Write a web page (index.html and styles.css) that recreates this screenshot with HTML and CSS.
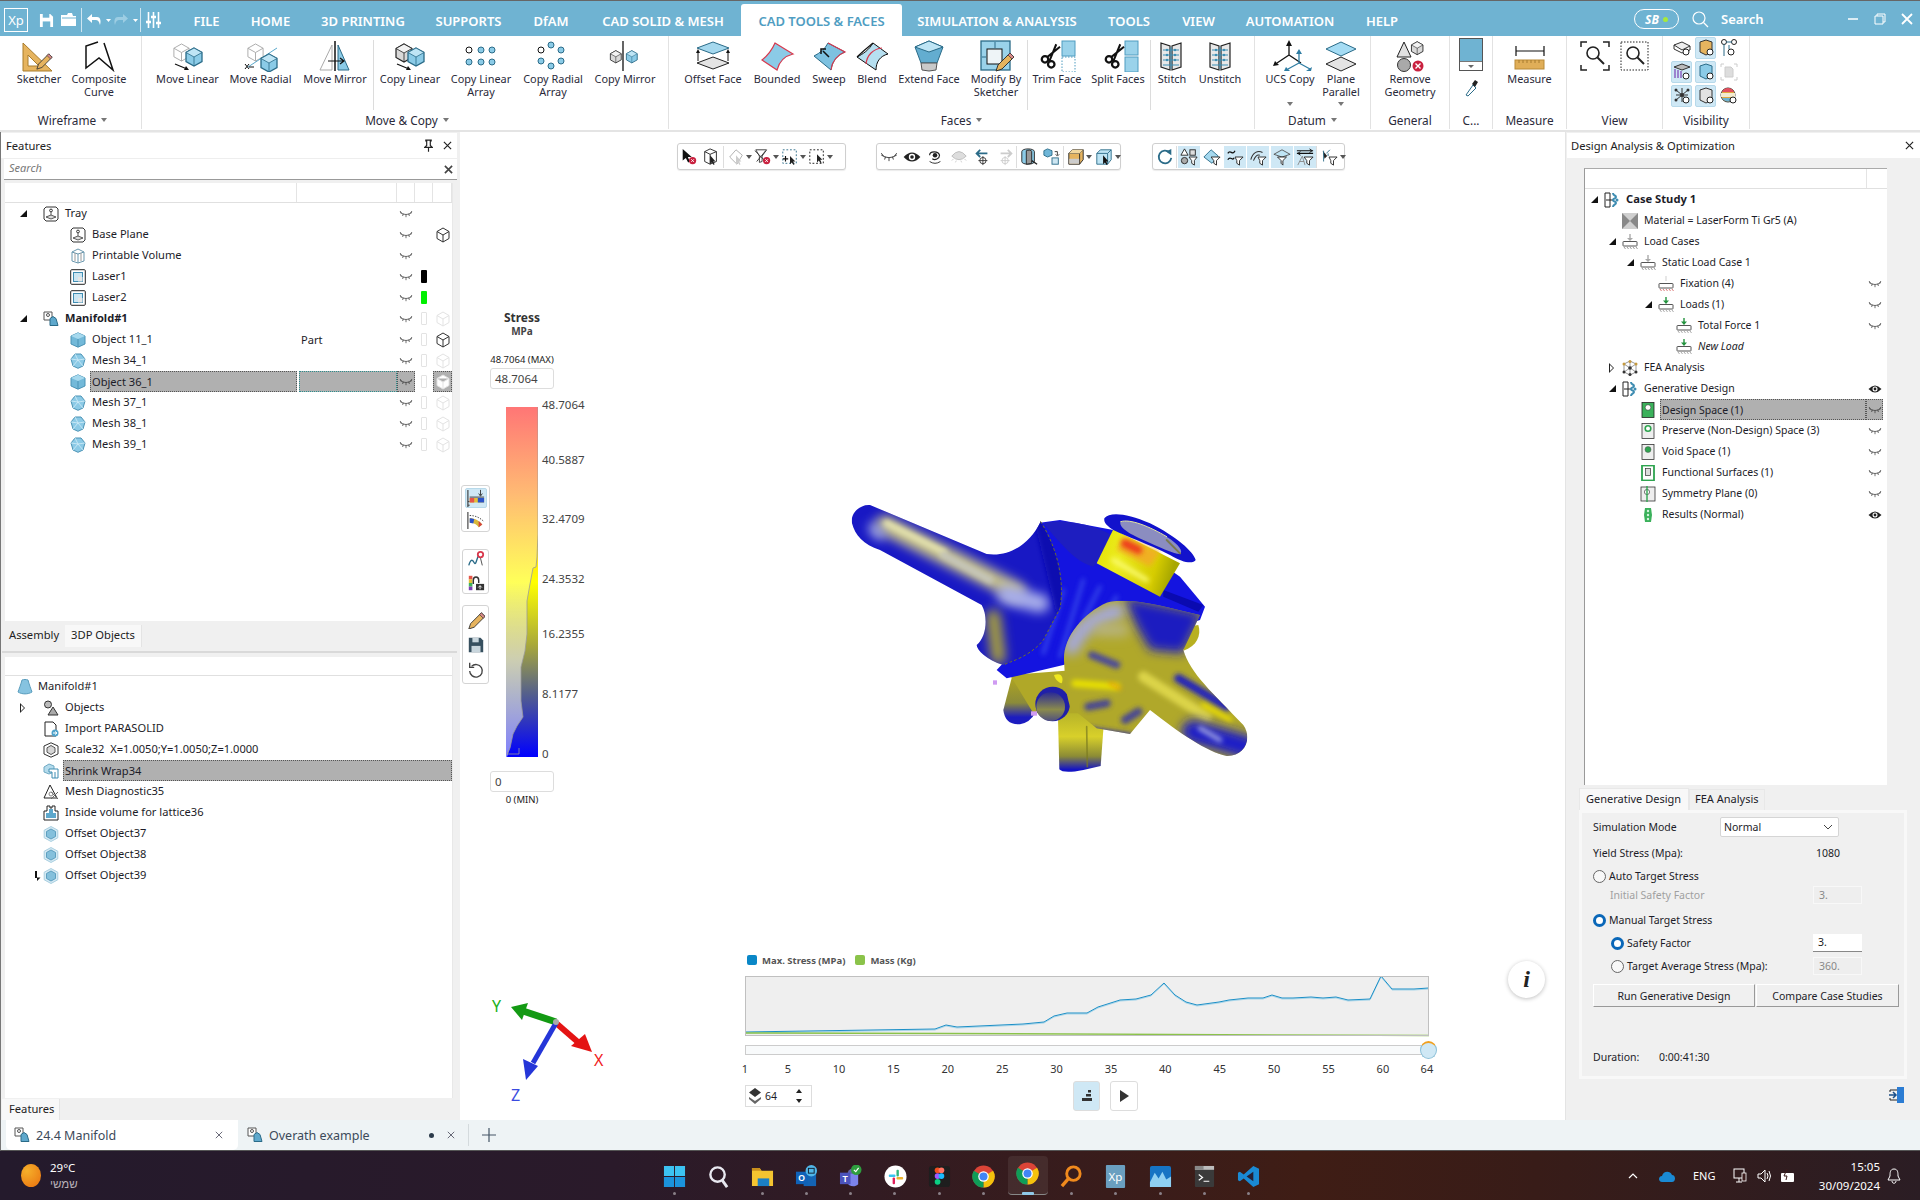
FILE: index.html
```html
<!DOCTYPE html>
<html lang="en">
<head>
<meta charset="utf-8">
<title>3D Xpert</title>
<link rel="stylesheet" href="styles.css">
</head>
<body>
<svg class="defs" aria-hidden="true">
<defs>
<g id="cb"><path d="M10 1 18 5.5V14.5L10 19 2 14.5V5.5Z" fill="#8bcbe7" stroke="#2a6b88" stroke-width="1.3"/><path d="M2 5.5 10 1 18 5.5 10 10Z" fill="#bfe5f5" stroke="#2a6b88" stroke-width=".8"/><path d="M10 10V19" stroke="#2a6b88" stroke-width=".8"/></g>
<g id="cg"><path d="M10 1 18 5.5V14.5L10 19 2 14.5V5.5Z" fill="#d9d9d9" stroke="#222" stroke-width="1.2"/><path d="M2 5.5 10 1 18 5.5 10 10Z" fill="#f2f2f2" stroke="#222" stroke-width=".8"/><path d="M10 10V19" stroke="#222" stroke-width=".8"/></g>
<g id="cw"><path d="M10 1 18 5.5V14.5L10 19 2 14.5V5.5Z M2 5.5 10 10 18 5.5M10 10V19" fill="#fff" stroke="#aaa" stroke-width="1"/></g>
<g id="sciss"><circle cx="4" cy="13" r="2.6" fill="#fff" stroke="#111" stroke-width="1.8"/><circle cx="9" cy="17" r="2.6" fill="#fff" stroke="#111" stroke-width="1.8"/><path d="M5.5 11.5 16 3M7.5 14.5 13 1" stroke="#111" stroke-width="1.6"/></g>
<g id="pencil"><path d="M15 1 19 5 7 17 1 19 3 13Z" fill="#e6b35e" stroke="#333" stroke-width="1"/><path d="M15 1 19 5 17 7 13 3Z" fill="#d98a8a" stroke="#333" stroke-width=".7"/></g>
<g id="stitch"><path d="M2 3 11 6V30L2 27ZM22 3 13 6V30L22 27Z" fill="#e8e8e8" stroke="#222" stroke-width="1.2"/><path d="M4 10H20M4 15H20M4 20H20M4 25H20" stroke="#3c8fb5" stroke-width="1"/><path d="M12 7V29" stroke="#3c8fb5" stroke-width="1"/><g fill="#3c8fb5"><circle cx="8" cy="10" r="1.2"/><circle cx="16" cy="10" r="1.2"/><circle cx="8" cy="15" r="1.2"/><circle cx="16" cy="15" r="1.2"/><circle cx="8" cy="20" r="1.2"/><circle cx="16" cy="20" r="1.2"/></g></g>
<symbol id="s-sketcher" viewBox="0 0 44 32"><path d="M6 3 35 31H6ZM11 15V26H22Z" fill="#e6b45f" fill-rule="evenodd" stroke="#a87c2c"/><use href="#pencil" transform="translate(19 13) scale(.85)"/></symbol>
<symbol id="s-comp" viewBox="0 0 44 32"><path d="M21 2 9 6V28L22 18 36 30 27 3" fill="none" stroke="#111" stroke-width="1.5"/></symbol>
<symbol id="s-mlin" viewBox="0 0 44 32"><use href="#cw" transform="translate(6 3) scale(.95)"/><use href="#cb" transform="translate(18 7)"/><path d="M9 24 21 29" stroke="#111" stroke-width="1.2"/><path d="M18 30 23 30 20 26Z" fill="#111"/></symbol>
<symbol id="s-mrad" viewBox="0 0 44 32"><use href="#cw" transform="translate(7 3) scale(.95)"/><path d="M38 8 9 27" stroke="#5aa8cb"/><use href="#cb" transform="translate(20 13)"/><path d="M6 24 10 29M6 29 10 24M10 27H15" stroke="#111"/></symbol>
<symbol id="s-mmir" viewBox="0 0 44 32"><path d="M19 5 7 30H19Z" fill="#fff" stroke="#aaa"/><path d="M25 5 36 30H25Z" fill="#8bcbe7" stroke="#2a6b88"/><path d="M22 1V31" stroke="#111" stroke-width="1.5"/><path d="M15 21H30M27 18 31 21 27 24" stroke="#111" stroke-width="1.2" fill="none"/></symbol>
<symbol id="s-clin" viewBox="0 0 44 32"><use href="#cg" transform="translate(6 3)"/><use href="#cb" transform="translate(18 7)"/><path d="M9 24 21 29" stroke="#111" stroke-width="1.2"/><path d="M18 30 23 30 20 26Z" fill="#111"/></symbol>
<symbol id="s-clar" viewBox="0 0 44 32"><g fill="#8bcbe7" stroke="#2a6b88"><circle cx="22" cy="10" r="3"/><circle cx="33" cy="10" r="3"/><circle cx="10" cy="22" r="3"/><circle cx="22" cy="22" r="3"/><circle cx="33" cy="22" r="3"/></g><circle cx="10" cy="10" r="3" fill="#fff" stroke="#111"/></symbol>
<symbol id="s-crar" viewBox="0 0 44 32"><g fill="#8bcbe7" stroke="#2a6b88"><circle cx="20" cy="5" r="3"/><circle cx="30" cy="10" r="3"/><circle cx="30" cy="21" r="3"/><circle cx="20" cy="26" r="3"/><circle cx="10" cy="21" r="3"/></g><circle cx="10" cy="10" r="3" fill="#fff" stroke="#111"/></symbol>
<symbol id="s-cmir" viewBox="0 0 44 32"><use href="#cg" transform="translate(6 10) scale(.68)"/><use href="#cb" transform="translate(22 10) scale(.68)"/><path d="M20 1V31" stroke="#111" stroke-width="1.3"/></symbol>
<symbol id="s-off" viewBox="0 0 44 32"><path d="M22 2 38 8 22 14 6 8Z" fill="#a5d8ee" stroke="#2a6b88"/><path d="M22 17 38 23 22 29 6 23Z" fill="#e4e4e4" stroke="#222"/><path d="M7 21V11M37 21V11" stroke="#111"/><path d="M5 13 7 9 9 13ZM35 13 37 9 39 13Z" fill="#111"/></symbol>
<symbol id="s-bound" viewBox="0 0 44 32"><path d="M20 3 38 14C30 16 24 22 22 30L7 20C12 16 17 10 20 3Z" fill="#8bcbe7" stroke="#d8394d" stroke-width="1.2"/></symbol>
<symbol id="s-sweep" viewBox="0 0 44 32"><path d="M21 3 38 12C30 15 25 22 24 30L7 16C13 13 18 9 21 3Z" fill="#7dc1e0" stroke="#2a6b88" stroke-width="1"/><path d="M21 3 38 12C30 15 25 22 24 30" fill="none" stroke="#d8394d" stroke-width="1.1"/><path d="M22 17 16 11M14 14V9H19" stroke="#111" stroke-width="1.5" fill="none"/></symbol>
<symbol id="s-blend" viewBox="0 0 44 32"><path d="M23 3 38 14C30 16 26 22 26 30L7 17C13 14 19 10 23 3Z" fill="#b6dff0" stroke="#111" stroke-width="1"/><path d="M32 8C23 9 17 15 16 24" fill="none" stroke="#d8394d" stroke-width="1.2"/><path d="M23 3C17 8 13 11 7 17" fill="none" stroke="#111" stroke-width="1.2"/></symbol>
<symbol id="s-ext" viewBox="0 0 44 32"><path d="M8 7 22 1 36 7 30 23H14Z" fill="#63add0" stroke="#2a6b88"/><path d="M8 7 22 1 36 7 22 12Z" fill="#bfe5f5" stroke="#2a6b88"/><path d="M14 23H30L29 30 22 31 15 30Z" fill="#c9c9c9" stroke="#555"/></symbol>
<symbol id="s-mod" viewBox="0 0 44 32"><rect x="7" y="1" width="29" height="29" fill="#9ad2ea" stroke="#2a6b88" stroke-width="1.3"/><rect x="13" y="9" width="15" height="15" fill="#eef4f7" stroke="#111"/><path d="M21 2V8M8 17H12" stroke="#2a6b88"/><use href="#pencil" transform="translate(21 12)"/></symbol>
<symbol id="s-trim" viewBox="0 0 44 32"><rect x="27" y="1" width="13" height="15" fill="#9ad2ea" stroke="#4f9cc0"/><rect x="27" y="17" width="13" height="15" fill="#fff" stroke="#4f9cc0" stroke-dasharray="1.5 1.5"/><use href="#sciss" transform="translate(5 3) scale(1.25)"/></symbol>
<symbol id="s-split" viewBox="0 0 44 32"><rect x="29" y="1" width="13" height="14" fill="#9ad2ea" stroke="#4f9cc0"/><rect x="29" y="17" width="13" height="15" fill="#9ad2ea" stroke="#4f9cc0"/><use href="#sciss" transform="translate(8 3) scale(1.25)"/></symbol>
<symbol id="s-sti" viewBox="0 0 44 32"><use href="#stitch" transform="translate(9 0)"/></symbol>
<symbol id="s-uns" viewBox="0 0 44 32"><use href="#stitch" transform="translate(10 0)"/></symbol>
<symbol id="s-ucs" viewBox="0 0 44 32"><path d="M21 2V15M21 15 9 23M21 15 33 23" stroke="#111" stroke-width="1.3" fill="none"/><path d="M18 6 21 0 24 6ZM7 21 5 26 11 25Z" fill="#111"/><path d="M31 11V23M31 23 20 29M31 23 42 29" stroke="#2f7da3" stroke-width="1.3" fill="none"/><path d="M28 14 31 9 34 14ZM18 27 16 31 22 31ZM44 27 43 31 38 31Z" fill="#2f7da3"/></symbol>
<symbol id="s-plane" viewBox="0 0 44 32"><path d="M22 2 37 9 22 16 7 9Z" fill="#a5dcf4" stroke="#2a6b88"/><path d="M22 17 37 24 22 31 7 24Z" fill="#e4e4e4" stroke="#222"/></symbol>
<symbol id="s-rem" viewBox="0 0 44 32"><path d="M16 2 23 17H9Z" fill="#e0e0e0" stroke="#222"/><use href="#cg" transform="translate(22 1) scale(.72)"/><circle cx="16" cy="25" r="6.5" fill="#a9a9a9" stroke="#333"/><circle cx="30" cy="26" r="5.5" fill="#c9213f"/><path d="M27.5 23.5 32.5 28.500M32.5 23.5 27.500 28.500" stroke="#fff" stroke-width="1.4"/></symbol>
<symbol id="s-meas" viewBox="0 0 44 32"><path d="M8 6V16M36 6V16M8 11H36" stroke="#111" stroke-width="1.2"/><rect x="7" y="20" width="29" height="9" fill="#e0ae58" stroke="#b98a37"/><path d="M11 20v3M15 20v3M19 20v3M23 20v3M27 20v3M31 20v3" stroke="#a67a2e"/></symbol>
<symbol id="e-c" viewBox="0 0 14 8"><path d="M1 2.500Q7 6.500 13 2.500M1 1 2.800 3.400M4.300 3.700 3.600 6M7 4.500V7.200M9.700 3.700 10.400 6M13 1 11.200 3.400" fill="none" stroke="#333" stroke-width=".7"/></symbol>
<symbol id="e-o" viewBox="0 0 14 10"><path d="M.5 5Q7-2 13.500 5 7 12 .5 5Z" fill="#222"/><circle cx="7" cy="5" r="2.500" fill="#fff"/><circle cx="7" cy="5" r="1.400" fill="#222"/></symbol>
<symbol id="t-box" viewBox="0 0 16 16"><path d="M8 1 14 4.500V11.500L8 15 2 11.500V4.500Z M2 4.500 8 8 14 4.500M8 8V15" fill="#fff" stroke="#333" stroke-width="1"/></symbol>
<symbol id="t-boxg" viewBox="0 0 16 16"><path d="M8 1 14 4.500V11.500L8 15 2 11.500V4.500Z M2 4.500 8 8 14 4.500M8 8V15" fill="#fff" stroke="#e3e3e3" stroke-width="1"/></symbol>
<symbol id="t-tray" viewBox="0 0 16 16"><path d="M3 1H13L15 3V13L13 15H3L1 13V3Z" fill="#fff" stroke="#333"/><circle cx="8" cy="4.500" r="1.400" fill="none" stroke="#333"/><path d="M8 6V9M3 11 8 9 13 11 8 13Z" stroke="#333" fill="#ddd" stroke-width=".8"/></symbol>
<symbol id="t-vol" viewBox="0 0 16 16"><path d="M2 4 8 1 14 4V13L8 15 2 13ZM2 4 8 6 14 4M8 6V15" fill="none" stroke="#6a97ad"/><path d="M5 5V13M11 5V13" stroke="#999"/></symbol>
<symbol id="t-las" viewBox="0 0 16 16"><rect x=".7" y=".7" width="14.600" height="14.600" rx="1" fill="#fff" stroke="#222"/><rect x="3.500" y="3.500" width="9" height="9" fill="#cde6f2" stroke="#3f8db2"/><rect x="8" y="8" width="4.500" height="4.500" fill="#e6e6e6"/></symbol>
<symbol id="t-man" viewBox="0 0 16 16"><path d="M1 1H9V9H1Z" fill="#fff" stroke="#555"/><circle cx="5" cy="4" r="1.500" fill="none" stroke="#555"/><path d="M7 15V8L10 6 13 8 15 15Z" fill="#5ea8cc" stroke="#2a6b88" transform="translate(0 -.5)"/></symbol>
<symbol id="t-cube" viewBox="0 0 16 16"><path d="M8 .8 15 4V12L8 15.200 1 12V4Z" fill="#73b9d9" stroke="#4b93b5"/><path d="M1 4 8 7 15 4 8 .8Z" fill="#a6d9ee"/><path d="M8 7V15" stroke="#4b93b5"/></symbol>
<symbol id="t-mesh" viewBox="0 0 16 16"><path d="M5 1H11L15 6 13 13 8 15.300 3 13 1 6Z" fill="#8ccae6" stroke="#4b93b5"/><path d="M5 1 8 7 15 6M8 7 3 13M8 7 13 13M1 6 8 7" stroke="#d3eef9" fill="none" stroke-width=".8"/></symbol>
<symbol id="t-cone" viewBox="0 0 16 16"><path d="M5 1C7 .3 9 .3 11 1 12 5 14 10 15 13 11 15.500 5 15.500 1 13 2 10 4 5 5 1Z" fill="#86c3e0" stroke="#5a9dbd"/></symbol>
<symbol id="t-objs" viewBox="0 0 16 16"><circle cx="5" cy="4.500" r="3.500" fill="#bbb" stroke="#333"/><path d="M10 7 15 15H5Z" fill="#aaa" stroke="#333"/></symbol>
<symbol id="t-imp" viewBox="0 0 16 16"><path d="M2 1H10L13 4V15H2Z" fill="#fff" stroke="#222"/><circle cx="12" cy="12" r="3.500" fill="#4fa3cb"/><path d="M10 12H14M12 10.500 14 12 12 13.500" stroke="#fff" fill="none"/></symbol>
<symbol id="t-sca" viewBox="0 0 16 16"><path d="M8 .8 15 4V12L8 15.200 1 12V4Z" fill="#fff" stroke="#333"/><path d="M8 3.500 12 5.800V10.200L8 12.500 4 10.200V5.800Z" fill="#d6d6d6" stroke="#555"/></symbol>
<symbol id="t-shr" viewBox="0 0 16 16"><path d="M1 4 6 1 11 3V9L6 11 1 9Z" fill="#b4dbec" stroke="#6fa9c3"/><path d="M6 6H15V15H9V9H6Z" fill="#fff" stroke="#3f8db2"/><path d="M12 9V15" stroke="#3f8db2"/></symbol>
<symbol id="t-dia" viewBox="0 0 16 16"><path d="M7 1 14 14H1Z" fill="#fff" stroke="#222"/><path d="M8 8 15 15M15 8 8 15" stroke="#666"/><circle cx="8" cy="10" r="2" fill="none" stroke="#888"/></symbol>
<symbol id="t-ins" viewBox="0 0 16 16"><path d="M1 6H4V1H7V3H9V1H12V6H15V15H1Z" fill="#fff" stroke="#222"/><path d="M3 13V8L6 8V4H10V8H13V13Z" fill="#5ea8cc"/></symbol>
<symbol id="t-oo" viewBox="0 0 16 16"><path d="M8 .5 14.800 4.200V11.800L8 15.500 1.200 11.800V4.200Z" fill="#d4e9f3" stroke="#aacfe0"/><path d="M8 3 12.500 5.500V10.500L8 13 3.500 10.500V5.500Z" fill="#84c0dc" stroke="#5e9fbf"/></symbol>
<symbol id="t-case" viewBox="0 0 16 16"><path d="M1 1H6V15H1ZM2 8H9" fill="#fff" stroke="#222"/><path d="M9 1C9 4 12 3 12 5 12 7 9 6 9 8 9 10 12 9 12 11 12 13 9 12 9 15" fill="none" stroke="#3f8db2" stroke-width="2"/><circle cx="13" cy="8" r="1.500" fill="#3f8db2"/></symbol>
<symbol id="t-mat" viewBox="0 0 16 16"><rect width="16" height="16" fill="#888"/><path d="M0 0 8 8 16 0ZM0 16 8 8 16 16Z" fill="#cfcfcf"/></symbol>
<symbol id="t-loadg" viewBox="0 0 16 16"><path d="M8 0V5" stroke="#aaa" stroke-width="1.400"/><path d="M5 4H11L8 7Z" fill="#aaa"/><rect x="1" y="7.500" width="14" height="4.500" rx=".5" fill="#fff" stroke="#555"/><path d="M2 13 3.500 15M5 13 6.500 15M8 13 9.500 15M11 13 12.500 15M14 13 15.500 15" stroke="#999"/></symbol>
<symbol id="t-fix" viewBox="0 0 16 16"><path d="M8 0V5" stroke="#ddd" stroke-width="1.400"/><rect x="1" y="7.500" width="14" height="4.500" rx=".5" fill="#fff" stroke="#555"/><path d="M2 13 3.500 15M5 13 6.500 15M8 13 9.500 15M11 13 12.500 15M14 13 15.500 15" stroke="#d77"/></symbol>
<symbol id="t-load" viewBox="0 0 16 16"><path d="M8 0V5" stroke="#23933e" stroke-width="1.400"/><path d="M5 3.500H11L8 7Z" fill="#23933e"/><rect x="1" y="7.500" width="14" height="4.500" rx=".5" fill="#fff" stroke="#555"/><path d="M2 13 3.500 15M5 13 6.500 15M8 13 9.500 15M11 13 12.500 15M14 13 15.500 15" stroke="#aaa"/></symbol>
<symbol id="t-fea" viewBox="0 0 16 16"><g stroke="#555" stroke-width=".6"><path d="M2 4 8 1 14 4 14 12 8 15 2 12ZM2 4 14 12M14 4 2 12M8 1V15" fill="none"/></g><g fill="#c59a3f"><circle cx="2" cy="4" r="1.500"/><circle cx="14" cy="4" r="1.500"/><circle cx="8" cy="1.500" r="1.500"/></g><g fill="#333"><circle cx="8" cy="8" r="1.800"/><circle cx="2" cy="12" r="1.500"/><circle cx="14" cy="12" r="1.500"/><circle cx="8" cy="14.500" r="1.500"/></g></symbol>
<symbol id="t-dsn" viewBox="0 0 16 16"><rect x="2" y=".5" width="12" height="15" fill="#3bb15b" stroke="#222" stroke-width=".8"/><circle cx="8" cy="5.500" r="2.800" fill="#fff" stroke="#222" stroke-width=".5"/></symbol>
<symbol id="t-pres" viewBox="0 0 16 16"><rect x="2" y=".5" width="12" height="15" fill="#eee" stroke="#333" stroke-width=".8"/><circle cx="8" cy="5.500" r="2.800" fill="#fff" stroke="#2ea44f" stroke-width="1.600"/></symbol>
<symbol id="t-void" viewBox="0 0 16 16"><rect x="2" y=".5" width="12" height="15" fill="#eee" stroke="#333" stroke-width=".8"/><circle cx="8" cy="5.500" r="3" fill="#2ea44f" stroke="#555" stroke-width=".5"/></symbol>
<symbol id="t-func" viewBox="0 0 16 16"><rect x="2" y=".5" width="12" height="15" fill="#fff" stroke="#2ea44f" stroke-width="1.800"/><rect x="5.500" y="3.500" width="5" height="7" fill="#ddd" stroke="#333" stroke-width=".7"/></symbol>
<symbol id="t-sym" viewBox="0 0 16 16"><rect x="1" y="1" width="14" height="14" fill="#eee" stroke="#333" stroke-width=".8"/><circle cx="7" cy="6" r="2.600" fill="#fff" stroke="#555" stroke-width=".8"/><path d="M7 0V16" stroke="#2ea44f" stroke-width="1.400"/></symbol>
<symbol id="t-res" viewBox="0 0 16 16"><path d="M5 1H11L12 8 11 15H5L4 8Z" fill="#3bb15b"/><g fill="#d7f2df"><circle cx="8" cy="4" r="1.200"/><circle cx="8" cy="8" r="1.200"/><circle cx="8" cy="12" r="1.200"/></g></symbol>
<symbol id="b-xc" viewBox="0 0 20 20"><path d="M3 1V14L6.500 11 9 16 11 15 8.700 10H13Z" fill="#111"/><circle cx="14" cy="14" r="4" fill="#c9213f"/><path d="M12.500 12.500 15.500 15.500M15.500 12.500 12.500 15.500" stroke="#fff"/></symbol>
<symbol id="b-cc" viewBox="0 0 20 20"><path d="M9 1 16 4V15L9 18 3 15V4ZM3 4 9 7 16 4M9 7V18" fill="#fff" stroke="#222"/><path d="M9 8V18L11 16 13 19 14 18 12.500 15 15 15Z" fill="#222"/></symbol>
<symbol id="b-gh" viewBox="0 0 20 20"><path d="M10 2 17 8 11 18 3 10Z" fill="#fff" stroke="#aaa"/><path d="M10 8V18L12 16 14 19 15 18 13.500 15 16 15Z" fill="#ccc"/></symbol>
<symbol id="b-fx" viewBox="0 0 20 20"><path d="M2 2H14L9 9V15L6 16V9Z" fill="#fff" stroke="#333"/><path d="M1 3 13 15M13 3 3 15" stroke="#333"/><circle cx="14" cy="14" r="4" fill="#c9213f"/><path d="M12.500 12.500 15.500 15.500M15.500 12.500 12.500 15.500" stroke="#fff"/></symbol>
<symbol id="b-dp" viewBox="0 0 20 20"><rect x="2" y="2" width="15" height="15" fill="none" stroke="#2a6b88" stroke-dasharray="2 2"/><path d="M5 9V15M2 12H8" stroke="#111" stroke-width="1.300"/><path d="M10 9V18L12 16 14 19 15 18 13.500 15 16 15Z" fill="#222"/></symbol>
<symbol id="b-dk" viewBox="0 0 20 20"><rect x="2" y="2" width="15" height="15" fill="none" stroke="#111" stroke-dasharray="2 2"/><path d="M10 7V16L12 14 14 17 15 16 13.500 13 16 13Z" fill="#222"/></symbol>
<symbol id="b-eh" viewBox="0 0 20 20"><path d="M4 8C4 3 14 3 15 8 15 12 10 14 7 12" fill="none" stroke="#222" stroke-width="1.300"/><circle cx="10" cy="8" r="2.500" fill="#222"/><path d="M4 15Q10 19 16 15" fill="none" stroke="#222"/></symbol>
<symbol id="b-eg" viewBox="0 0 20 20"><path d="M2 9Q10-1 18 9 10 17 2 9Z" fill="#ddd" stroke="#bbb"/><path d="M2 14 4 12M6 16 7 14M13 16 12 14M18 14 16 12" stroke="#ccc"/></symbol>
<symbol id="b-al" viewBox="0 0 20 20"><path d="M16 6H5M8 2 4 6 8 10" fill="none" stroke="#2a6b88" stroke-width="2"/><circle cx="11" cy="14" r="3.500" fill="none" stroke="#333"/><path d="M11 9V19M6 14H16" stroke="#333"/></symbol>
<symbol id="b-ar" viewBox="0 0 20 20"><path d="M4 6H15M12 2 16 6 12 10" fill="none" stroke="#ccc" stroke-width="2"/><circle cx="9" cy="14" r="3.500" fill="none" stroke="#ccc"/><path d="M9 9V19M4 14H14" stroke="#ccc"/></symbol>
<symbol id="b-cy" viewBox="0 0 20 20"><path d="M2 4C2 0 16 0 16 4V15C16 19 2 19 2 15Z" fill="#8bcbe7" stroke="#222"/><path d="M7 3C9 2 13 2 13 4V17L7 18Z" fill="#999" stroke="#222"/><path d="M13 14 19 18" stroke="#222" stroke-width="1.500"/></symbol>
<symbol id="b-cs" viewBox="0 0 20 20"><path d="M5 1 10 3V8L5 10 1 8V3Z" fill="#6fb6d8" stroke="#2a6b88"/><rect x="10" y="11" width="7" height="7" fill="#cde6f2" stroke="#2a6b88"/><path d="M13 4H16V8M14 7 16 9 18 7" fill="none" stroke="#333"/></symbol>
<symbol id="b-cy2" viewBox="0 0 20 20"><path d="M6 2H18V13L14 18H2V6Z" fill="#e6b45f" stroke="#222"/><path d="M2 6H14V18M14 6 18 2" fill="none" stroke="#222"/><path d="M2 6 6 2H18L14 6Z" fill="#f2d89e"/><rect x="2.500" y="12" width="11" height="5.500" fill="#ccc"/></symbol>
<symbol id="b-cw" viewBox="0 0 20 20"><path d="M6 2H18V13L14 18H2V6Z" fill="#bfe5f5" stroke="#2a6b88"/><path d="M2 6H14V18M14 6 18 2" fill="none" stroke="#2a6b88"/><path d="M9 8V18L11 16 13 19 14 18 12.500 15 15 15Z" fill="#111"/></symbol>
<symbol id="b-rot" viewBox="0 0 20 20"><path d="M15 5A7 7 0 1 0 17 11" fill="none" stroke="#2a6b88" stroke-width="2"/><path d="M11 4 17 1V8Z" fill="#2a6b88"/></symbol>
<symbol id="b-fa" viewBox="0 0 20 20"><path d="M5 1 9 8H1Z" fill="#fff" stroke="#222"/><circle cx="5" cy="14" r="3.500" fill="#aaa" stroke="#222"/><rect x="11" y="2" width="6" height="6" fill="#ddd" stroke="#222"/><path d="M10 10H19L16 14V19L13 17V14Z" fill="#fff" stroke="#222"/></symbol>
<symbol id="b-fb" viewBox="0 0 20 20"><path d="M1 10 9 2 17 9 10 17Z" fill="#a5d8ee" stroke="#2a6b88"/><path d="M9 10H19L15 14V19L12 17V14Z" fill="#fff" stroke="#222"/></symbol>
<symbol id="b-fc" viewBox="0 0 20 20"><path d="M2 6C5 1 7 9 10 3M2 13C5 8 7 15 9 11" fill="none" stroke="#111" stroke-width="1.400"/><path d="M10 10H19L15 14V19L12 17V14Z" fill="#fff" stroke="#222"/></symbol>
<symbol id="b-fd" viewBox="0 0 20 20"><path d="M2 13C4 5 10 2 15 5M5 14C7 9 9 7 12 8" fill="none" stroke="#333" stroke-width="1.200"/><path d="M10 10H19L15 14V19L12 17V14Z" fill="#fff" stroke="#222"/></symbol>
<symbol id="b-fe" viewBox="0 0 20 20"><path d="M1 7 10 2 19 7 10 10Z" fill="#bfe5f5" stroke="#555"/><path d="M5 10H15L11 14V19L9 17V14Z" fill="#fff" stroke="#222"/></symbol>
<symbol id="b-ff" viewBox="0 0 20 20"><path d="M1 3H19M1 6H19" stroke="#111" stroke-width="1.200"/><path d="M15 1 18 3 15 5M5 4 2 6 5 8" fill="none" stroke="#111"/><path d="M2 19 7 9 10 19M4 15H9" stroke="#888" fill="none"/><path d="M9 10H19L15 14V19L12 17V14Z" fill="#fff" stroke="#222"/></symbol>
<symbol id="b-fg" viewBox="0 0 20 20"><path d="M3 3 5 12 8 9Z" fill="#222"/><path d="M9 9V6M4 15V3M11 2 7 6" stroke="#2a6b88" fill="none"/><path d="M10 10H19L15 14V19L12 17V14Z" fill="#fff" stroke="#222"/></symbol>
<linearGradient id="bar1" x1="0" y1="0" x2="0" y2="1"><stop offset="0" stop-color="#ff3b3b"/><stop offset=".25" stop-color="#ff9a30"/><stop offset=".5" stop-color="#ffff00"/><stop offset=".68" stop-color="#a8a83a"/><stop offset=".82" stop-color="#545f8c"/><stop offset="1" stop-color="#0000ff"/></linearGradient>
<linearGradient id="wash" x1="0" y1="0" x2="0" y2="1"><stop offset="0" stop-color="#fff" stop-opacity=".3"/><stop offset=".5" stop-color="#fff" stop-opacity=".35"/><stop offset=".72" stop-color="#fff" stop-opacity=".55"/><stop offset="1" stop-color="#fff" stop-opacity=".5"/></linearGradient>
<linearGradient id="lowt" x1="0" y1="0" x2="0" y2="1"><stop offset="0" stop-color="#9c9c28"/><stop offset=".55" stop-color="#d8d02a"/><stop offset=".8" stop-color="#8c8c35"/><stop offset=".97" stop-color="#1414c4"/></linearGradient>
<linearGradient id="lowl" x1="0" y1="0" x2="0" y2="1"><stop offset="0" stop-color="#b0a520"/><stop offset=".55" stop-color="#8b8b3a"/><stop offset=".85" stop-color="#1c1cc0"/></linearGradient>
<linearGradient id="circ" x1="0" y1="0" x2="0" y2="1"><stop offset="0" stop-color="#2a2a96"/><stop offset=".6" stop-color="#8a8a4c"/><stop offset="1" stop-color="#50507f"/></linearGradient>
<linearGradient id="col" x1="0" y1="0" x2="1" y2=".25"><stop offset="0" stop-color="#e3e000"/><stop offset=".35" stop-color="#ecec20"/><stop offset=".8" stop-color="#d6cc00"/><stop offset="1" stop-color="#a8a800"/></linearGradient>
<filter id="bl8" filterUnits="userSpaceOnUse" x="0" y="0" width="1350" height="900"><feGaussianBlur stdDeviation="8"/></filter>
<filter id="bl16" filterUnits="userSpaceOnUse" x="0" y="0" width="1350" height="900"><feGaussianBlur stdDeviation="16"/></filter>
<clipPath id="c-larm"><path d="M66 130C60 100 90 72 120 75L470 222C540 232 600 190 632 125 680 200 705 300 690 385L640 480C600 530 540 545 520 555 470 540 440 510 440 495 470 470 475 410 455 375L150 210C100 195 75 165 66 130Z"/></clipPath>
<clipPath id="c-rarm"><path d="M702 540C700 470 760 400 830 368 900 350 1000 380 1110 405L1060 510C1080 580 1150 640 1240 735 1270 780 1240 830 1190 828 1130 815 1050 760 960 690L900 762 800 745 720 680C705 630 705 590 702 540Z"/></clipPath>
</defs>
</svg>
<div class="app">
  <header class="titlebar">
    <div class="xp">Xp</div>
    <svg class="qa q-save" viewBox="0 0 16 16"><path d="M1 1H12L15 4V15H1Z" fill="#fff"/><rect x="4" y="1" width="7" height="4" fill="#6fb3d2"/><rect x="4" y="9" width="8" height="6" fill="#6fb3d2"/></svg>
    <svg class="qa q-open" viewBox="0 0 16 14"><path d="M0 2H6L7 0H11L12 3H15V13H0Z" fill="#fff"/><path d="M1 5H15" stroke="#6fb3d2"/></svg>
    <i class="qsep"></i>
    <svg class="qa q-undo" viewBox="0 0 24 14"><path d="M5 4H10C14 4 14 9 13 12 12 8 11 7 8 7H5V10L0 5.500 5 1Z" fill="#fff"/><path d="M19 6H24L21.500 9Z" fill="#fff"/></svg>
    <svg class="qa q-redo" viewBox="0 0 24 14"><path d="M9 4H4C0 4 0 9 1 12 2 8 3 7 6 7H9V10L14 5.500 9 1Z" fill="#9ccde3"/><path d="M19 6H24L21.500 9Z" fill="#fff"/></svg>
    <i class="qsep q2"></i>
    <svg class="qa q-set" viewBox="0 0 15 16"><path d="M2.500 0V16M7.500 0V16M12.500 0V16" stroke="#fff" stroke-width="1.600"/><path d="M0 10H5M5 5H10M10 11H15" stroke="#fff" stroke-width="2.400"/></svg>
    <nav class="tabs-main">
      <span class="mt t57">FILE</span><span class="mt t71">HOME</span><span class="mt t114">3D PRINTING</span><span class="mt t97">SUPPORTS</span><span class="mt t68">DfAM</span><span class="mt t156">CAD SOLID &amp; MESH</span><span class="mt t161 active">CAD TOOLS &amp; FACES</span><span class="mt t190">SIMULATION &amp; ANALYSIS</span><span class="mt t74">TOOLS</span><span class="mt t65">VIEW</span><span class="mt t118">AUTOMATION</span><span class="mt t66">HELP</span>
    </nav>
    <div class="tright">
      <div class="sb"><b>SB</b><i></i></div>
      <svg class="srch" viewBox="0 0 17 17"><circle cx="7" cy="7" r="6" fill="none" stroke="#fff" stroke-width="1.200"/><path d="M11.500 11.500 16 16" stroke="#fff" stroke-width="1.200"/></svg>
      <span class="stx">Search</span>
      <svg class="wc" viewBox="0 0 12 12"><path d="M1 6H11" stroke="#fff" stroke-width="1.500"/></svg>
      <svg class="wc" viewBox="0 0 12 12"><path d="M3 3V1H11V9H9M1 3H9V11H1Z" fill="none" stroke="#fff"/></svg>
      <svg class="wc" viewBox="0 0 12 12"><path d="M1 1 11 11M11 1 1 11" stroke="#fff" stroke-width="1.800"/></svg>
    </div>
  </header>

  <section class="ribbon">
    <div class="grp g-wire"><div class="btns">
      <div class="rb w60"><svg class="ri"><use href="#s-sketcher"/></svg><span>Sketcher</span></div>
      <div class="rb w60"><svg class="ri"><use href="#s-comp"/></svg><span>Composite<br>Curve</span></div>
    </div><div class="gl">Wireframe <i class="car"></i></div></div>
    <div class="grp g-move"><div class="btns">
      <div class="rb w73"><svg class="ri"><use href="#s-mlin"/></svg><span>Move Linear</span></div>
      <div class="rb w73"><svg class="ri"><use href="#s-mrad"/></svg><span>Move Radial</span></div>
      <div class="rb w76"><svg class="ri"><use href="#s-mmir"/></svg><span>Move Mirror</span></div>
      <i class="isep"></i>
      <div class="rb w72"><svg class="ri"><use href="#s-clin"/></svg><span>Copy Linear</span></div>
      <div class="rb w70"><svg class="ri"><use href="#s-clar"/></svg><span>Copy Linear<br>Array</span></div>
      <div class="rb w74"><svg class="ri"><use href="#s-crar"/></svg><span>Copy Radial<br>Array</span></div>
      <div class="rb w70"><svg class="ri"><use href="#s-cmir"/></svg><span>Copy Mirror</span></div>
    </div><div class="gl">Move &amp; Copy <i class="car"></i></div></div>
    <div class="grp g-faces"><div class="btns">
      <div class="rb w78"><svg class="ri"><use href="#s-off"/></svg><span>Offset Face</span></div>
      <div class="rb w50"><svg class="ri"><use href="#s-bound"/></svg><span>Bounded</span></div>
      <div class="rb w54"><svg class="ri"><use href="#s-sweep"/></svg><span>Sweep</span></div>
      <div class="rb w32"><svg class="ri"><use href="#s-blend"/></svg><span>Blend</span></div>
      <div class="rb w82"><svg class="ri"><use href="#s-ext"/></svg><span>Extend Face</span></div>
      <div class="rb w52"><svg class="ri"><use href="#s-mod"/></svg><span>Modify By<br>Sketcher</span></div>
      <i class="isep s5"></i>
      <div class="rb w58"><svg class="ri"><use href="#s-trim"/></svg><span>Trim Face</span></div>
      <div class="rb w64"><svg class="ri"><use href="#s-split"/></svg><span>Split Faces</span></div>
      <i class="isep"></i>
      <div class="rb w42"><svg class="ri"><use href="#s-sti"/></svg><span>Stitch</span></div>
      <div class="rb w54"><svg class="ri"><use href="#s-uns"/></svg><span>Unstitch</span></div>
    </div><div class="gl">Faces <i class="car"></i></div></div>
    <div class="grp g-datum"><div class="btns">
      <div class="rb w60"><svg class="ri"><use href="#s-ucs"/></svg><span>UCS Copy</span><i class="car down"></i></div>
      <div class="rb w42"><svg class="ri"><use href="#s-plane"/></svg><span>Plane<br>Parallel</span><i class="car"></i></div>
    </div><div class="gl">Datum <i class="car"></i></div></div>
    <div class="grp g-gen"><div class="btns">
      <div class="rb w78"><svg class="ri"><use href="#s-rem"/></svg><span>Remove<br>Geometry</span></div>
    </div><div class="gl">General</div></div>
    <div class="grp g-col"><div class="btns col-btn">
      <div class="swatch"><i></i></div>
      <svg class="drop" viewBox="0 0 14 18"><path d="M2 16 9 6 12 9 4 17Z" fill="#fff" stroke="#2a6b88"/><path d="M8 5 11 1 14 3 11 8Z" fill="#222"/></svg>
    </div><div class="gl">C...</div></div>
    <div class="grp g-meas"><div class="btns">
      <div class="rb w73"><svg class="ri"><use href="#s-meas"/></svg><span>Measure</span></div>
    </div><div class="gl">Measure</div></div>
    <div class="grp g-view"><div class="btns view-btn">
      <svg class="vz" viewBox="0 0 30 30"><path d="M1 6V1H7M23 1H29V6M29 24V29H23M7 29H1V24" fill="none" stroke="#222" stroke-width="1.500"/><circle cx="13" cy="12" r="6" fill="none" stroke="#222" stroke-width="1.600"/><path d="M17.500 16.500 24 23" stroke="#222" stroke-width="2"/></svg>
      <svg class="vz vz2" viewBox="0 0 30 30"><rect x="1" y="1" width="27" height="28" fill="none" stroke="#222" stroke-dasharray="1.500 1.500"/><circle cx="13" cy="12" r="6" fill="none" stroke="#222" stroke-width="1.600"/><path d="M17.500 16.500 24 23" stroke="#222" stroke-width="2"/></svg>
    </div><div class="gl">View</div></div>
    <div class="grp g-vis"><div class="btns vis-grid">
      <span class="vi"><svg viewBox="0 0 18 18"><path d="M1 6 9 3 17 7 9 11Z" fill="#eee" stroke="#333"/><path d="M1 6V10L9 14 17 11V7" fill="none" stroke="#333"/><circle cx="13" cy="13" r="3" fill="#fff" stroke="#222"/></svg></span>
      <span class="vi on"><svg viewBox="0 0 18 18"><path d="M3 3 9 1 15 3V13L9 16 3 13Z" fill="#e6b45f" stroke="#333"/><circle cx="13" cy="13" r="3" fill="#fff" stroke="#222"/></svg></span>
      <span class="vi"><svg viewBox="0 0 18 18"><circle cx="4" cy="3" r="2.500" fill="none" stroke="#222"/><circle cx="14" cy="3" r="2.500" fill="none" stroke="#222"/><path d="M6 3H12M4 5V17M9 6V10" stroke="#2a6b88"/><circle cx="11" cy="13" r="3" fill="#fff" stroke="#222"/></svg></span>
      <span class="vi on"><svg viewBox="0 0 18 18"><path d="M1 4 9 1 17 4 9 7Z" fill="#bbb" stroke="#333"/><path d="M2 6V15M5 7V15M8 8V15" stroke="#7a3fb5" stroke-width="1.200"/><circle cx="13" cy="13" r="3" fill="#fff" stroke="#222"/></svg></span>
      <span class="vi on"><svg viewBox="0 0 18 18"><path d="M3 3 9 1 15 3V13L9 16 3 13Z" fill="#8bcbe7" stroke="#2a6b88"/><circle cx="13" cy="13" r="3" fill="#fff" stroke="#222"/></svg></span>
      <span class="vi"><svg viewBox="0 0 18 18"><path d="M1 4V1H4M14 1H17V4M17 14V17H14M4 17H1V14" fill="none" stroke="#ccc"/><path d="M5 4H11L13 6V14H5Z" fill="#ddd" stroke="#ccc"/></svg></span>
      <span class="vi on"><svg viewBox="0 0 18 18"><path d="M3 3 15 13M15 3 3 13M9 1V15M3 8H15" stroke="#333"/><g fill="#333"><circle cx="3" cy="3" r="1.500"/><circle cx="15" cy="3" r="1.500"/><circle cx="9" cy="8" r="2"/><circle cx="3" cy="13" r="1.500"/></g><circle cx="13" cy="13" r="3" fill="#fff" stroke="#222"/></svg></span>
      <span class="vi on"><svg viewBox="0 0 18 18"><path d="M3 3 9 1 15 3V13L9 16 3 13Z" fill="#e2e2e2" stroke="#333"/><circle cx="13" cy="13" r="3" fill="#fff" stroke="#222"/></svg></span>
      <span class="vi"><svg viewBox="0 0 18 18"><circle cx="8" cy="8" r="7" fill="#e0a83f" stroke="#333"/><path d="M1 6H15V10H1Z" fill="#f3ebd0"/><path d="M8 1A7 7 0 0 1 14 5H2A7 7 0 0 1 8 1Z" fill="#e34f5f"/><path d="M2 11H14A7 7 0 0 1 2 11Z" fill="#6fb3d2"/><circle cx="13" cy="13" r="3" fill="#fff" stroke="#222"/></svg></span>
    </div><div class="gl">Visibility</div></div>
  </section>

  <main class="main">
    <aside class="lpanel">
      <div class="phead"><span>Features</span>
        <svg class="pin" viewBox="0 0 10 14"><path d="M2 1H8V2H7V7L9 9H1L3 7V2H2ZM5 9V14" fill="none" stroke="#222" stroke-width="1.300"/></svg>
        <svg class="x" viewBox="0 0 10 10"><path d="M1 1 9 9M9 1 1 9" stroke="#222" stroke-width="1.300"/></svg>
      </div>
      <div class="search"><em>Search</em><svg class="x" viewBox="0 0 10 10"><path d="M1 1 9 9M9 1 1 9" stroke="#444" stroke-width="1.800"/></svg></div>
      <div class="tree t1">
        <div class="thead"><i></i><i></i><i></i><i></i><i></i></div>
        <div class="row"><div class="nm"><i class="arr dn"></i><svg class="ti"><use href="#t-tray"/></svg><span class="tx">Tray</span></div><b></b><b class="c"><svg class="ey"><use href="#e-c"/></svg></b><b></b><b></b></div>
        <div class="row"><div class="nm l1"><i class="arr"></i><svg class="ti"><use href="#t-tray"/></svg><span class="tx">Base Plane</span></div><b></b><b class="c"><svg class="ey"><use href="#e-c"/></svg></b><b></b><b class="c"><svg class="ti"><use href="#t-box"/></svg></b></div>
        <div class="row"><div class="nm l1"><i class="arr"></i><svg class="ti"><use href="#t-vol"/></svg><span class="tx">Printable Volume</span></div><b></b><b class="c"><svg class="ey"><use href="#e-c"/></svg></b><b></b><b></b></div>
        <div class="row"><div class="nm l1"><i class="arr"></i><svg class="ti"><use href="#t-las"/></svg><span class="tx">Laser1</span></div><b></b><b class="c"><svg class="ey"><use href="#e-c"/></svg></b><b class="c"><i class="sw blk"></i></b><b></b></div>
        <div class="row"><div class="nm l1"><i class="arr"></i><svg class="ti"><use href="#t-las"/></svg><span class="tx">Laser2</span></div><b></b><b class="c"><svg class="ey"><use href="#e-c"/></svg></b><b class="c"><i class="sw grn"></i></b><b></b></div>
        <div class="row"><div class="nm"><i class="arr dn"></i><svg class="ti"><use href="#t-man"/></svg><span class="tx bold">Manifold#1</span></div><b></b><b class="c"><svg class="ey"><use href="#e-c"/></svg></b><b class="c"><i class="sw gh"></i></b><b class="c"><svg class="ti"><use href="#t-boxg"/></svg></b></div>
        <div class="row"><div class="nm l1"><i class="arr"></i><svg class="ti"><use href="#t-cube"/></svg><span class="tx">Object 11_1</span></div><b class="part">Part</b><b class="c"><svg class="ey"><use href="#e-c"/></svg></b><b class="c"><i class="sw gh"></i></b><b class="c"><svg class="ti"><use href="#t-box"/></svg></b></div>
        <div class="row"><div class="nm l1"><i class="arr"></i><svg class="ti"><use href="#t-mesh"/></svg><span class="tx">Mesh 34_1</span></div><b></b><b class="c"><svg class="ey"><use href="#e-c"/></svg></b><b class="c"><i class="sw gh"></i></b><b class="c"><svg class="ti"><use href="#t-boxg"/></svg></b></div>
        <div class="row"><div class="nm l1"><i class="arr"></i><svg class="ti"><use href="#t-cube"/></svg><span class="tx sel">Object 36_1</span></div><b class="sel teal"></b><b class="c sel"><svg class="ey"><use href="#e-c"/></svg></b><b class="c"><i class="sw gh"></i></b><b class="c sel"><svg class="ti"><use href="#t-boxg"/></svg></b></div>
        <div class="row"><div class="nm l1"><i class="arr"></i><svg class="ti"><use href="#t-mesh"/></svg><span class="tx">Mesh 37_1</span></div><b></b><b class="c"><svg class="ey"><use href="#e-c"/></svg></b><b class="c"><i class="sw gh"></i></b><b class="c"><svg class="ti"><use href="#t-boxg"/></svg></b></div>
        <div class="row"><div class="nm l1"><i class="arr"></i><svg class="ti"><use href="#t-mesh"/></svg><span class="tx">Mesh 38_1</span></div><b></b><b class="c"><svg class="ey"><use href="#e-c"/></svg></b><b class="c"><i class="sw gh"></i></b><b class="c"><svg class="ti"><use href="#t-boxg"/></svg></b></div>
        <div class="row"><div class="nm l1"><i class="arr"></i><svg class="ti"><use href="#t-mesh"/></svg><span class="tx">Mesh 39_1</span></div><b></b><b class="c"><svg class="ey"><use href="#e-c"/></svg></b><b class="c"><i class="sw gh"></i></b><b class="c"><svg class="ti"><use href="#t-boxg"/></svg></b></div>
      </div>
      <div class="ltabs"><span>Assembly</span><span class="on">3DP Objects</span></div>
      <div class="split"></div>
      <div class="tree t2">
        <div class="thead2"></div>
        <div class="row1"><div class="nm root"><svg class="ti"><use href="#t-cone"/></svg><span class="tx">Manifold#1</span></div></div>
        <div class="row1"><div class="nm"><i class="arr rt"></i><svg class="ti"><use href="#t-objs"/></svg><span class="tx">Objects</span></div></div>
        <div class="row1"><div class="nm"><i class="arr"></i><svg class="ti"><use href="#t-imp"/></svg><span class="tx">Import PARASOLID</span></div></div>
        <div class="row1"><div class="nm"><i class="arr"></i><svg class="ti"><use href="#t-sca"/></svg><span class="tx">Scale32&nbsp; X=1.0050;Y=1.0050;Z=1.0000</span></div></div>
        <div class="row1"><div class="nm"><i class="arr"></i><svg class="ti"><use href="#t-shr"/></svg><span class="tx sel">Shrink Wrap34</span></div></div>
        <div class="row1"><div class="nm"><i class="arr"></i><svg class="ti"><use href="#t-dia"/></svg><span class="tx">Mesh Diagnostic35</span></div></div>
        <div class="row1"><div class="nm"><i class="arr"></i><svg class="ti"><use href="#t-ins"/></svg><span class="tx">Inside volume for lattice36</span></div></div>
        <div class="row1"><div class="nm"><i class="arr"></i><svg class="ti"><use href="#t-oo"/></svg><span class="tx">Offset Object37</span></div></div>
        <div class="row1"><div class="nm"><i class="arr"></i><svg class="ti"><use href="#t-oo"/></svg><span class="tx">Offset Object38</span></div></div>
        <div class="row1"><div class="nm"><i class="arr"><svg class="rollb" viewBox="0 0 7 10"><path d="M1 0V7H3V10L6.500 6.500H3V0Z" fill="#111"/></svg></i><svg class="ti"><use href="#t-oo"/></svg><span class="tx">Offset Object39</span></div></div>
      </div>
      <div class="ltabs bottom"><span class="on">Features</span></div>
    </aside>

    <section class="viewport">
      <div class="vtools">
        <div class="vbox b1">
          <svg class="vi1"><use href="#b-xc"/></svg><svg class="vi1"><use href="#b-cc"/></svg><i class="vs"></i>
          <svg class="vi1"><use href="#b-gh"/></svg><i class="car"></i><svg class="vi1"><use href="#b-fx"/></svg><i class="car"></i><svg class="vi1"><use href="#b-dp"/></svg><i class="car"></i><svg class="vi1"><use href="#b-dk"/></svg><i class="car"></i>
        </div>
        <div class="vbox b2">
          <svg class="vi1"><use href="#e-c"/></svg><svg class="vi1"><use href="#e-o"/></svg><svg class="vi1"><use href="#b-eh"/></svg><svg class="vi1"><use href="#b-eg"/></svg><svg class="vi1"><use href="#b-al"/></svg><svg class="vi1"><use href="#b-ar"/></svg><i class="vs"></i>
          <svg class="vi1"><use href="#b-cy"/></svg><svg class="vi1"><use href="#b-cs"/></svg><i class="vs"></i>
          <svg class="vi1"><use href="#b-cy2"/></svg><i class="car"></i><svg class="vi1"><use href="#b-cw"/></svg><i class="car"></i>
        </div>
        <div class="vbox b3">
          <svg class="vi1"><use href="#b-rot"/></svg><i class="vs"></i>
          <svg class="vi1 hl"><use href="#b-fa"/></svg><svg class="vi1"><use href="#b-fb"/></svg><svg class="vi1 hl"><use href="#b-fc"/></svg><svg class="vi1 hl"><use href="#b-fd"/></svg><svg class="vi1 hl"><use href="#b-fe"/></svg><svg class="vi1 hl"><use href="#b-ff"/></svg><i class="vs"></i>
          <svg class="vi1"><use href="#b-fg"/></svg><i class="car"></i>
        </div>
      </div>

      <div class="legend">
        <div class="lg-t">Stress</div>
        <div class="lg-u">MPa</div>
        <div class="lg-m">48.7064 (MAX)</div>
        <div class="lg-in">48.7064</div>
        <div class="lg-body">
          <svg class="lg-bar" viewBox="0 0 32 350"><rect width="32" height="350" fill="url(#bar1)"/><path d="M0 0H32V127L31 150 30 160 27 161 24 177 21 194 21 227 19 244 15 260 15 294 17 310 11 319 7 327 4 341 1 350H0Z" fill="url(#wash)"/><path d="M32 0V127L31 150 30 160 27 161 24 177 21 194 21 227 19 244 15 260 15 294 17 310 11 319 7 327 4 341 1 347H13V341" fill="none" stroke="#9a9a9a" stroke-width=".8"/></svg>
          <div class="lg-lb"><span>48.7064</span><span>40.5887</span><span>32.4709</span><span>24.3532</span><span>16.2355</span><span>8.1177</span><span>0</span></div>
        </div>
        <div class="lg-in lo">0</div>
        <div class="lg-m mn">0 (MIN)</div>
      </div>

      <div class="stool st1">
        <span class="on"><svg viewBox="0 0 20 20"><path d="M1 1V20" stroke="#333" stroke-width="1.200"/><path d="M1 14H3M1 18H3" stroke="#333"/><rect x="3" y="10" width="16" height="5" fill="#e0c13a"/><rect x="3" y="10" width="5" height="5" fill="#e5554a"/><rect x="12" y="10" width="7" height="5" fill="#2a52c8"/><path d="M3 9H19" stroke="#333"/><path d="M15 1V7M13 5 15 8 17 5" stroke="#333" fill="none"/></svg></span>
        <span><svg viewBox="0 0 20 20"><path d="M1 1V20" stroke="#333" stroke-width="1.200"/><path d="M3 8C9 8 14 11 17 15L13 18C10 14 7 13 3 13Z" fill="#d8b83b"/><path d="M3 8C5 8 6 8.500 8 9L7 14 3 13Z" fill="#2a52c8"/><path d="M13 11 17 15 13 18Z" fill="#d2453f"/><path d="M3 5C10 5 15 8 19 12" fill="none" stroke="#333" stroke-dasharray="1.500 1.500"/></svg></span>
      </div>
      <div class="stool st2">
        <span><svg viewBox="0 0 20 20"><path d="M2 16C4 9 6 9 8 13 10 17 11 7 13 5" fill="none" stroke="#2a6b88" stroke-width="1.500"/><circle cx="15" cy="4" r="3" fill="#fff" stroke="#d8394d" stroke-width="2"/><path d="M15 8 17 16" stroke="#444"/></svg></span>
        <span><svg viewBox="0 0 20 20"><rect x="2" y="2" width="4" height="4" fill="#e5554a"/><rect x="2" y="6" width="4" height="4" fill="#e0c13a"/><rect x="2" y="10" width="4" height="4" fill="#3fb45a"/><rect x="2" y="14" width="4" height="4" fill="#7a3fb5"/><path d="M7 11V7C7 2 13 2 13 7V10" fill="none" stroke="#333" stroke-width="1.600"/><rect x="10" y="11" width="9" height="7" fill="#333"/><path d="M14.500 13V17M12.500 15 14.500 13 16.500 15" stroke="#fff" fill="none"/></svg></span>
      </div>
      <div class="stool st3">
        <span><svg viewBox="0 0 20 20"><use href="#pencil" transform="translate(1 1)"/></svg></span>
        <span><svg viewBox="0 0 20 20"><path d="M2 2H15L18 5V18H2Z" fill="#37505f"/><rect x="6" y="2" width="7" height="5" fill="#c9d6dd"/><rect x="5" y="11" width="10" height="7" fill="#c9d6dd"/></svg></span>
        <span><svg viewBox="0 0 20 20"><path d="M5 6A7 7 0 1 1 3 11" fill="none" stroke="#444" stroke-width="1.500"/><path d="M8 7H3V2" fill="none" stroke="#444" stroke-width="1.500"/></svg></span>
      </div>

      <svg class="model" viewBox="0 0 1350 900" stroke-linecap="round">
        <path d="M682 640 688 868Q700 882 760 870L812 858 828 640Z" fill="url(#lowt)"/>
        <path d="M770 740 772 860" stroke="#7a7a20" stroke-width="5" opacity=".7" fill="none"/>
        <path d="M546 590 520 690Q525 735 570 733 600 728 615 700L640 600Z" fill="url(#lowl)"/>
        <path d="M540 585 735 570 745 700 610 700Z" fill="#b0a828"/>
        <path d="M1105 435C1115 465 1100 500 1060 512L1070 440Z" fill="#b8b020"/>
        <path d="M630 128 690 120 850 150 1050 290 1125 380 1110 420 700 555 530 595 500 570 660 400Z" fill="#1414e0"/>
        <path d="M700 330 640 520M760 300 690 530M810 320 760 420M860 350 820 420" stroke="#4a62f0" stroke-width="10" opacity=".7" filter="url(#bl8)" fill="none"/>
        <path d="M640 130C720 110 830 150 850 170L790 260C740 250 690 190 640 130Z" fill="#2020b8" opacity=".8"/>
        <path d="M1000 330 1120 375 1105 395 1000 350Z" fill="#0a0ab0"/>
        <g clip-path="url(#c-larm)">
          <rect width="800" height="620" fill="#1818c4"/>
          <path d="M165 135 560 335" stroke="#c4bf8a" stroke-width="58" fill="none" filter="url(#bl16)"/>
          <path d="M170 130 340 215" stroke="#e4e2ae" stroke-width="20" fill="none" filter="url(#bl8)"/>
          <path d="M340 225 480 300" stroke="#c6c6ba" stroke-width="22" fill="none" filter="url(#bl8)"/>
          <path d="M530 345 630 370" stroke="#a8aeea" stroke-width="56" fill="none" filter="url(#bl16)"/>
          <path d="M130 145 150 165" stroke="#a8b0e8" stroke-width="30" fill="none" filter="url(#bl16)"/>
          <path d="M490 410 505 530" stroke="#a59e3c" stroke-width="44" fill="none" filter="url(#bl16)"/>
          <path d="M640 130 700 380" stroke="#0a0ab0" stroke-width="50" fill="none" filter="url(#bl8)"/>
        </g>
        <path d="M632 125C680 200 705 300 690 385L640 480C600 530 540 545 520 555" fill="none" stroke="#6e6e30" stroke-width="3" stroke-dasharray="6 9"/>
        <path d="M672 585C700 575 700 600 695 610 680 605 675 595 672 585Z" fill="#efe820"/>
        <circle cx="668" cy="672" r="52" fill="#2020a8"/>
        <circle cx="662" cy="680" r="43" fill="url(#circ)"/>
        <g clip-path="url(#c-rarm)">
          <rect x="680" y="340" width="620" height="520" fill="#b0a82a"/>
          <path d="M880 350 1120 400 1060 520 960 510 920 440Z" fill="#1c1cc0" filter="url(#bl16)"/>
          <path d="M725 500Q760 420 860 395" stroke="#a5a8d8" stroke-width="50" fill="none" filter="url(#bl16)"/>
          <path d="M810 450 880 450" stroke="#b8b482" stroke-width="36" fill="none" filter="url(#bl16)"/>
          <path d="M785 525 860 555" stroke="#3838b0" stroke-width="22" fill="none" filter="url(#bl8)" opacity=".85"/>
          <path d="M775 680 830 670M885 720 925 695" stroke="#3434a8" stroke-width="24" fill="none" filter="url(#bl8)" opacity=".85"/>
          <path d="M730 745 900 770" stroke="#2a2ab0" stroke-width="20" fill="none" filter="url(#bl8)"/>
          <path d="M735 610 860 620" stroke="#e8e000" stroke-width="22" fill="none" filter="url(#bl8)"/>
          <path d="M840 610 870 625" stroke="#e87818" stroke-width="6" fill="none" filter="url(#bl8)"/>
          <path d="M1045 595 1190 680" stroke="#2222bc" stroke-width="26" fill="none" filter="url(#bl8)"/>
          <path d="M940 590 1130 710" stroke="#dcd44a" stroke-width="32" fill="none" filter="url(#bl8)"/>
          <path d="M1120 675 1200 720" stroke="#eee000" stroke-width="14" fill="none" filter="url(#bl8)"/>
          <path d="M1090 755 1245 800" stroke="#1a1ac8" stroke-width="70" fill="none" filter="url(#bl16)"/>
          <path d="M1110 745 1170 780" stroke="#9ea2e0" stroke-width="14" fill="none" filter="url(#bl8)"/>
        </g>
        <path d="M850 148 800 250 990 350 1050 250Z" fill="url(#col)"/>
        <path d="M880 170 860 210 960 260 990 215Z" fill="#f0b020" filter="url(#bl8)"/>
        <path d="M885 190 925 210" stroke="#ee3a1a" stroke-width="24" fill="none" filter="url(#bl8)"/>
        <path d="M850 240 950 300" stroke="#fbfb70" stroke-width="14" fill="none" filter="url(#bl8)"/>
        <path d="M823 115C840 95 890 100 960 130 1040 170 1090 215 1097 240 1090 252 1060 250 1020 225 950 190 890 170 850 150 835 140 820 130 823 115Z" fill="#1212cc"/>
        <path d="M872 125C900 115 960 140 1010 170 1050 195 1060 215 1050 222 1030 222 985 200 940 180 895 160 865 140 872 125Z" fill="#8b8dc0"/>
        <path d="M872 125C900 115 960 140 1010 170" stroke="#e6e6a0" stroke-width="3" fill="none"/>
        <path d="M1010 180 1050 220" stroke="#7a7a50" stroke-width="6" fill="none"/>
        <rect x="489" y="601" width="12" height="13" fill="#cf9bf2"/>
        <rect x="603" y="694" width="18" height="13" fill="#cf9bf2"/>
      </svg>

      <svg class="triad" viewBox="0 0 110 110">
        <path d="M57 23 24 12" stroke="#139a13" stroke-width="7"/><path d="M12 8 29 4 23 21Z" fill="#139a13"/>
        <path d="M57 24 80 44" stroke="#e41414" stroke-width="6"/><path d="M93 53 72 47 86 35Z" fill="#e41414"/>
        <path d="M57 24 34 64" stroke="#2536d8" stroke-width="5"/><path d="M27 81 24 60 39 67Z" fill="#2536d8"/>
        <circle cx="57" cy="23" r="3" fill="#aaa"/>
      </svg>
      <span class="ax ax-y">Y</span><span class="ax ax-x">X</span><span class="ax ax-z">Z</span>

      <div class="chart">
        <div class="ch-lg"><i class="blue"></i><span>Max. Stress (MPa)</span><i class="green"></i><span>Mass (Kg)</span></div>
        <svg class="ch-plot" viewBox="0 0 684 60"><polyline fill="none" stroke="#a8d6ea" stroke-width="1" points="0 57 190 54 201 50 212 52 256 50 278 49 299 47 309 41 322 38 342 38 353 32 375 25 391 24 406 20 419 8 430 20 441 27 452 30 474 27 484 25 503 23 518 23 527 20 537 23 548 23 566 22 578 23 591 22 603 25 625 24 636 1 647 14 669 14 684 13"/><polyline fill="none" stroke="#1b8fc7" stroke-width="1" points="0 56 190 53 201 49 212 51 256 49 278 48 299 46 309 40 322 37 342 37 353 31 375 24 391 23 406 19 419 7 430 19 441 26 452 29 474 26 484 24 503 22 518 22 527 19 537 22 548 22 566 21 578 22 591 21 603 24 625 23 636 0 647 13 669 13 683.500 12 683.500 60"/><polyline fill="none" stroke="#8bc34a" stroke-width="1.400" points="0 57 200 57.500 684 59.500"/></svg>
        <div class="ch-slide"><i class="thumb"></i></div>
        <div class="ch-ax"><span>1</span><span>5</span><span>10</span><span>15</span><span>20</span><span>25</span><span>30</span><span>35</span><span>40</span><span>45</span><span>50</span><span>55</span><span>60</span><span>64</span></div>
        <div class="ch-ctl">
          <div class="spin"><svg viewBox="0 0 12 16"><path d="M6 0 12 4.500 6 9 0 4.500Z" fill="#333"/><path d="M0 9 6 13 12 9 12 11 6 16 0 11Z" fill="#666"/></svg><span>64</span><em><svg viewBox="0 0 8 16"><path d="M4 1 7 5H1ZM4 15 1 11H7Z" fill="#222"/></svg></em></div>
          <div class="cbtn on"><svg viewBox="0 0 14 14"><rect x="8" y="1" width="3" height="2.500" fill="#333"/><rect x="6" y="5" width="5" height="2.500" fill="#333"/><rect x="2" y="9" width="10" height="3" fill="#333"/></svg></div>
          <div class="cbtn"><svg viewBox="0 0 14 14"><path d="M3 1 12 7 3 13Z" fill="#333"/></svg></div>
        </div>
      </div>
      <div class="info">i</div>
    </section>

    <aside class="rpanel">
      <div class="phead r"><span>Design Analysis &amp; Optimization</span><svg class="x" viewBox="0 0 10 10"><path d="M1 1 9 9M9 1 1 9" stroke="#222" stroke-width="1.300"/></svg></div>
      <div class="rtree">
        <div class="rhead"><i></i></div>
        <div class="rr"><div class="rn n0"><i class="arr dn"></i><svg class="ti"><use href="#t-case"/></svg><span class="tx bold">Case Study 1</span></div></div>
        <div class="rr"><div class="rn n1"><i class="arr"></i><svg class="ti"><use href="#t-mat"/></svg><span class="tx">Material = LaserForm Ti Gr5 (A)</span></div></div>
        <div class="rr"><div class="rn n1"><i class="arr dn"></i><svg class="ti"><use href="#t-loadg"/></svg><span class="tx">Load Cases</span></div></div>
        <div class="rr"><div class="rn n2"><i class="arr dn"></i><svg class="ti"><use href="#t-loadg"/></svg><span class="tx">Static Load Case 1</span></div></div>
        <div class="rr"><div class="rn n3"><i class="arr"></i><svg class="ti"><use href="#t-fix"/></svg><span class="tx">Fixation (4)</span></div><b class="c"><svg class="ey"><use href="#e-c"/></svg></b></div>
        <div class="rr"><div class="rn n3"><i class="arr dn"></i><svg class="ti"><use href="#t-load"/></svg><span class="tx">Loads (1)</span></div><b class="c"><svg class="ey"><use href="#e-c"/></svg></b></div>
        <div class="rr"><div class="rn n4"><i class="arr"></i><svg class="ti"><use href="#t-load"/></svg><span class="tx">Total Force 1</span></div><b class="c"><svg class="ey"><use href="#e-c"/></svg></b></div>
        <div class="rr"><div class="rn n4"><i class="arr"></i><svg class="ti"><use href="#t-load"/></svg><span class="tx it">New Load</span></div></div>
        <div class="rr"><div class="rn n1"><i class="arr rt"></i><svg class="ti"><use href="#t-fea"/></svg><span class="tx">FEA Analysis</span></div></div>
        <div class="rr"><div class="rn n1"><i class="arr dn"></i><svg class="ti"><use href="#t-case"/></svg><span class="tx">Generative Design</span></div><b class="c"><svg class="eo"><use href="#e-o"/></svg></b></div>
        <div class="rr"><div class="rn n2"><i class="arr"></i><svg class="ti"><use href="#t-dsn"/></svg><span class="tx sel">Design Space (1)</span></div><b class="c sel"><svg class="ey"><use href="#e-c"/></svg></b></div>
        <div class="rr"><div class="rn n2"><i class="arr"></i><svg class="ti"><use href="#t-pres"/></svg><span class="tx">Preserve (Non-Design) Space (3)</span></div><b class="c"><svg class="ey"><use href="#e-c"/></svg></b></div>
        <div class="rr"><div class="rn n2"><i class="arr"></i><svg class="ti"><use href="#t-void"/></svg><span class="tx">Void Space (1)</span></div><b class="c"><svg class="ey"><use href="#e-c"/></svg></b></div>
        <div class="rr"><div class="rn n2"><i class="arr"></i><svg class="ti"><use href="#t-func"/></svg><span class="tx">Functional Surfaces (1)</span></div><b class="c"><svg class="ey"><use href="#e-c"/></svg></b></div>
        <div class="rr"><div class="rn n2"><i class="arr"></i><svg class="ti"><use href="#t-sym"/></svg><span class="tx">Symmetry Plane (0)</span></div><b class="c"><svg class="ey"><use href="#e-c"/></svg></b></div>
        <div class="rr"><div class="rn n2"><i class="arr"></i><svg class="ti"><use href="#t-res"/></svg><span class="tx">Results (Normal)</span></div><b class="c"><svg class="eo"><use href="#e-o"/></svg></b></div>
      </div>
      <div class="rtabs"><span class="on">Generative Design</span><span>FEA Analysis</span></div>
      <div class="gd">
        <div class="gr h20"><span class="lab">Simulation Mode</span><div class="sel-box">Normal<svg viewBox="0 0 10 6"><path d="M1 1 5 5 9 1" fill="none" stroke="#444"/></svg></div></div>
        <div class="gr h20 m6"><span class="lab">Yield Stress (Mpa):</span><span class="val">1080</span></div>
        <div class="gr h20 m3"><i class="radio"></i><span>Auto Target Stress</span></div>
        <div class="gr h18 ind"><span class="dis">Initial Safety Factor</span><span class="inp dis-in">3.</span></div>
        <div class="gr h20 m6"><i class="radio on"></i><span>Manual Target Stress</span></div>
        <div class="gr h18 m4 ind2"><i class="radio on"></i><span>Safety Factor</span><span class="inp act">3.</span></div>
        <div class="gr h18 m5 ind2"><i class="radio"></i><span>Target Average Stress (Mpa):</span><span class="inp dis-in">360.</span></div>
        <div class="gr btnrow"><button class="pb p1">Run Generative Design</button><button class="pb p2">Compare Case Studies</button></div>
        <div class="gr h20 dur"><span class="lab dl">Duration:</span><span>0:00:41:30</span></div>
      </div>
      <svg class="exit" viewBox="0 0 16 16"><rect x="8" y="0" width="7" height="16" fill="#2b7cd3"/><path d="M1 3H8M1 13H8M1 3V5M1 11V13" stroke="#222" fill="none"/><path d="M0 8H7M4 5 7 8 4 11" stroke="#1a4f8a" stroke-width="1.500" fill="none"/></svg>
    </aside>
  </main>

  <div class="doctabs">
    <div class="dt on"><svg class="di" viewBox="0 0 16 16"><use href="#t-man"/></svg><span>24.4 Manifold</span><svg class="dx" viewBox="0 0 10 10"><path d="M1 1 9 9M9 1 1 9" stroke="#445"/></svg></div>
    <div class="dt two"><svg class="di" viewBox="0 0 16 16"><use href="#t-man"/></svg><span>Overath example</span><i class="dot"></i><svg class="dx" viewBox="0 0 10 10"><path d="M1 1 9 9M9 1 1 9" stroke="#445"/></svg></div>
    <i class="dsep"></i>
    <svg class="dplus" viewBox="0 0 14 14"><path d="M7 0V14M0 7H14" stroke="#456" stroke-width="1.200"/></svg>
  </div>

  <footer class="taskbar">
    <div class="weather">
      <i class="sun"></i>
      <div class="wt"><span>29°C</span><span class="he" lang="he" dir="rtl">שמשי</span></div>
    </div>
    <div class="tb"><svg viewBox="0 0 24 24"><path d="M1 1H11.500V11.500H1ZM12.500 1H23V11.500H12.500ZM1 12.500H11.500V23H1ZM12.500 12.500H23V23H12.500Z" fill="#3cc3f2"/><path d="M1 12.500H11.500V23H1ZM12.500 12.500H23V23H12.500Z" fill="#1b93dc"/></svg><u></u></div>
    <div class="tb"><svg viewBox="0 0 24 24"><circle cx="11" cy="10" r="7.500" fill="none" stroke="#e8e8f0" stroke-width="2.500"/><path d="M16 16 21 23" stroke="#e8e8f0" stroke-width="3"/></svg></div>
    <div class="tb"><svg viewBox="0 0 24 24"><path d="M1 3H9L11 6H23V22H1Z" fill="#f4c430"/><path d="M1 3H9L11 6H1Z" fill="#c98f1c"/><rect x="7" y="14" width="12" height="8" fill="#1b7fc4"/></svg><u></u></div>
    <div class="tb"><svg viewBox="0 0 24 24"><path d="M9 8H22V22H9Z" fill="#1464b4"/><rect x="1" y="7" width="12" height="13" fill="#0f62b8"/><text x="7" y="17" class="svt">O</text><circle cx="17" cy="6" r="6" fill="#51b6e8"/><rect x="14" y="3.500" width="6" height="5" fill="none" stroke="#123" stroke-width="1"/></svg><u></u></div>
    <div class="tb"><svg viewBox="0 0 24 24"><circle cx="14" cy="9" r="5" fill="#6264a7"/><path d="M8 9H20V20C16 24 10 22 8 18Z" fill="#7b83eb"/><rect x="1" y="8" width="11" height="12" fill="#4b53bc"/><text x="6.500" y="17.500" class="svt">T</text><circle cx="18" cy="5" r="5.500" fill="#2e9e3f"/><path d="M15.500 5 17.500 7 20.500 3" stroke="#fff" fill="none" stroke-width="1.200"/></svg><u></u></div>
    <div class="tb"><svg viewBox="0 0 24 24"><circle cx="12" cy="12" r="11.500" fill="#fff"/><rect x="5" y="10" width="7" height="2.500" rx="1" fill="#36c5f0"/><rect x="13" y="5" width="2.500" height="7" rx="1" fill="#2eb67d"/><rect x="13" y="12.500" width="7" height="2.500" rx="1" fill="#ecb22e"/><rect x="9" y="13" width="2.500" height="7" rx="1" fill="#e01e5a"/></svg><u></u></div>
    <div class="tb"><svg viewBox="0 0 24 24"><rect x="1" y="1" width="22" height="22" rx="3" fill="#1e1e1e"/><circle cx="10" cy="5.500" r="3" fill="#f24e1e"/><circle cx="14" cy="5.500" r="3" fill="#ff7262"/><circle cx="10" cy="11.500" r="3" fill="#a259ff"/><circle cx="14" cy="11.500" r="3" fill="#1abcfe"/><circle cx="10" cy="17.500" r="3" fill="#0acf83"/></svg><u></u></div>
    <div class="tb"><svg viewBox="0 0 24 24"><circle cx="12" cy="12" r="11.500" fill="#db4437"/><path d="M12 12 22 6A11.500 11.500 0 0 1 12 23.500Z" fill="#f4c20d"/><path d="M12 12 12 23.500A11.500 11.500 0 0 1 2 6Z" fill="#0f9d58"/><circle cx="12" cy="12" r="5.500" fill="#fff"/><circle cx="12" cy="12" r="4.200" fill="#4285f4"/></svg><u></u></div>
    <div class="tb act"><svg viewBox="0 0 24 24"><circle cx="12" cy="12" r="11.500" fill="#db4437"/><path d="M12 12 22 6A11.500 11.500 0 0 1 12 23.500Z" fill="#f4c20d"/><path d="M12 12 12 23.500A11.500 11.500 0 0 1 2 6Z" fill="#0f9d58"/><circle cx="12" cy="12" r="5.500" fill="#fff"/><circle cx="12" cy="12" r="4.200" fill="#4285f4"/></svg><u></u></div>
    <div class="tb"><svg viewBox="0 0 24 24"><circle cx="14" cy="9" r="7" fill="none" stroke="#f08a1d" stroke-width="3"/><path d="M9 14 2 22" stroke="#f08a1d" stroke-width="3.500"/></svg><u></u></div>
    <div class="tb"><svg viewBox="0 0 24 24"><rect x="2" width="20" height="24" rx="1" fill="#6a9fc0"/><text x="12" y="17" class="svx">Xp</text></svg><u></u></div>
    <div class="tb"><svg viewBox="0 0 24 24"><rect x="1" y="1" width="22" height="22" rx="2" fill="#1674c4"/><path d="M1 18 6 8 10 14 14 7 18 15 23 12V23H1Z" fill="#8fd0f2"/></svg><u></u></div>
    <div class="tb"><svg viewBox="0 0 24 24"><rect x="2" y="1" width="20" height="22" rx="1" fill="#3a3a3a"/><rect x="2" y="1" width="20" height="4" fill="#bdbdbd"/><rect x="2" y="1" width="9" height="4" fill="#888"/><path d="M6 10 10 13 6 16M11 17H17" stroke="#fff" fill="none" stroke-width="1.200"/></svg><u></u></div>
    <div class="tb"><svg viewBox="0 0 24 24"><path d="M17 1 23 4V20L17 23 7 14 3 17 1 16V8L3 7 7 10Z" fill="#1a8ad4"/><path d="M17 7V17L10 12Z" fill="#262035"/></svg><u></u></div>
    <div class="tray">
      <svg class="tr-c" viewBox="0 0 10 6"><path d="M1 5 5 1 9 5" stroke="#fff" fill="none" stroke-width="1.200"/></svg>
      <svg class="tr-o" viewBox="0 0 18 13"><path d="M4 13C0 13 0 7 4 7 5 2 12 1 14 6 18 6 18 13 14 13Z" fill="#1a8ad4"/></svg>
      <span class="eng">ENG</span>
      <svg class="tr-i" viewBox="0 0 16 16"><rect x="2" y="1" width="10" height="9" fill="none" stroke="#fff"/><path d="M7 10V14M4 14H10" stroke="#fff"/><rect x="10" y="5" width="4" height="8" fill="#3a1c1c" stroke="#fff" stroke-width=".8"/></svg>
      <svg class="tr-i" viewBox="0 0 16 16"><path d="M2 6H5L9 2V14L5 10H2Z" fill="none" stroke="#fff"/><path d="M11 5Q13 8 11 11M13 3Q16 8 13 13" fill="none" stroke="#fff"/></svg>
      <svg class="tr-i" viewBox="0 0 16 16"><rect x="1" y="5" width="13" height="9" rx="1" fill="#fff"/><path d="M7 1 4 8H7L6 12" stroke="#3a1c1c" fill="none"/></svg>
      <div class="clock"><span>15:05</span><span>30/09/2024</span></div>
      <svg class="tr-b" viewBox="0 0 14 16"><path d="M7 1C3 1 3 5 3 8L1 12H13L11 8C11 5 11 1 7 1ZM5 13C5 16 9 16 9 13" fill="none" stroke="#fff"/></svg>
    </div>
  </footer>
</div>
</body>
</html>
```
FILE: styles.css
```css
*{box-sizing:border-box}
html,body{margin:0;padding:0;height:100%}
body{width:1920px;height:1200px;overflow:hidden;font-family:"Noto Sans","Liberation Sans",sans-serif;font-size:11.1px;color:#1c1c28;background:#f0f0f0}
.defs{position:absolute;width:0;height:0;overflow:hidden}
.app{display:flex;flex-direction:column;width:1920px;height:1200px}
i{display:block;font-style:normal}
b{font-weight:400}

/* title bar */
.titlebar{height:36px;flex:none;display:flex;align-items:center;background:#6fb3d2;border-top:1px solid #666;color:#fff;position:relative}
.xp{width:24px;height:24px;margin:2px 0 0 4px;border:1px solid #fff;font-size:13px;display:flex;align-items:center;justify-content:center;color:#fff}
.qa{display:block;flex:none;margin-top:3px}
.q-save{width:15px;height:15px;margin-left:11px}
.q-open{width:16px;height:14px;margin-left:7px}
.qsep{width:1px;height:24px;background:#cfe6f1;margin:3px 0 0 4px}
.q-undo{width:24px;height:14px;margin-left:5px}
.q-redo{width:24px;height:14px;margin-left:3px}
.qsep.q2{margin-left:2px}
.q-set{width:15px;height:16px;margin-left:5px}
.tabs-main{display:flex;align-self:flex-end;height:32px;position:absolute;left:178px;bottom:0}
.mt{display:flex;align-items:center;justify-content:center;padding-top:1px;font-size:13px;font-weight:600;white-space:nowrap;color:#fff;height:32px;flex:none}
.mt.active{background:#fff;color:#4f9dc2;border-radius:3px 3px 0 0}
.t57{width:57px}.t71{width:71px}.t114{width:114px}.t97{width:97px}.t68{width:68px}.t156{width:156px}.t161{width:161px}.t190{width:190px}.t74{width:74px}.t65{width:65px}.t118{width:118px}.t66{width:66px}
.tright{position:absolute;left:1634px;top:8px;display:flex;align-items:center;height:20px}
.sb{width:45px;height:20px;border:1px solid #fff;border-radius:10px;display:flex;align-items:center;justify-content:center;gap:4px}
.sb b{font-weight:700;font-style:italic;font-size:12px}
.sb i{width:5px;height:5px;border-radius:50%;background:#a6ea3a}
.srch{width:17px;height:17px;margin-left:13px}
.stx{margin-left:12px;font-size:13px;font-weight:600;width:42px}
.wc{width:12px;height:12px;margin-left:15px}
.stx + .wc{margin-left:84px}

/* ribbon */
.ribbon{height:96px;flex:none;background:#fff;border-bottom:2px solid #e4e4e4;display:flex}
.grp{display:flex;flex-direction:column;border-right:1px solid #e2e2e2;height:93px;flex:none}
.btns{display:flex;height:76px;flex:none}
.gl{height:16px;display:flex;align-items:center;justify-content:center;gap:5px;font-size:11.800px;color:#2a2a3a}
.gl:has(.car){padding-right:5px}
.car{width:0;height:0;border:3.500px solid transparent;border-top:4px solid #777;border-bottom:0;flex:none}
.rb{display:flex;flex-direction:column;align-items:center;flex:none;font-size:10.900px;line-height:13px;text-align:center;color:#2a2a3a;white-space:nowrap;position:relative}
.rb span{display:block}
.rb > .car{position:absolute;left:50%;margin-left:-3.500px;top:66px}
.ri{width:44px;height:32px;margin-top:4px;flex:none;display:block}
.w32{width:32px}.w42{width:42px}.w50{width:50px}.w52{width:52px}.w54{width:54px}.w58{width:58px}.w60{width:60px}.w64{width:64px}.w70{width:70px}.w72{width:72px}.w73{width:73px}.w74{width:74px}.w76{width:76px}.w78{width:78px}.w82{width:82px}
.isep{width:1px;height:70px;margin-top:4px;background:#dcdcdc;flex:none}
.isep.s5{margin-left:5px}
.g-wire{width:142px;padding-left:9px}
.g-move{width:527px;padding-left:9px}
.g-faces{width:586px;padding-left:5px}
.g-datum{width:116px;padding-left:5px}
.g-gen{width:79px}
.g-col{width:43px}
.g-meas{width:74px}
.g-view{width:96px}
.g-vis{width:87px}
.col-btn{flex-direction:column;align-items:center}
.swatch{width:24px;height:33px;margin-top:2px;border:1px solid #555;background:#6fb3d2;position:relative;flex:none}
.swatch i{position:absolute;left:0;right:0;bottom:0;height:9px;background:#fff;border-top:1px solid #777}
.swatch i::after{content:"";position:absolute;left:8px;top:3px;border:3px solid transparent;border-top:3px solid #666}
.drop{width:14px;height:18px;margin-top:8px}
.view-btn{padding:5px 0 0 13px}
.vz{width:30px;height:30px;flex:none}
.vz2{margin-left:10px}
.vis-grid{display:grid;grid-template-columns:24px 23px 22px;grid-auto-rows:24px;padding:0 0 0 8px;width:87px;margin-top:0;height:76px}
.vi{width:21px;height:22px;display:flex;align-items:center;justify-content:center;border-radius:2px;margin-top:1px}
.vi.on{background:#cfe8f5;border:1px solid #b7d9ea}
.vi svg{width:18px;height:18px}

/* main */
.main{height:988px;flex:none;display:flex}
.lpanel{width:460px;flex:none;display:flex;flex-direction:column;background:#f0f0f0;border-left:1px solid #777}
.phead{height:25px;flex:none;margin:1px 3px 0 0;background:#fff;padding:0 0 0 5px;display:flex;align-items:center;font-size:11.200px;color:#222;position:relative}
.phead span{flex:1}
.pin{width:9px;height:13px;margin-right:10px}
.x{width:9px;height:9px;flex:none}
.phead .x{margin-right:5px}
.search{height:22px;flex:none;margin:0 3px 0 3px;background:#fff;border-bottom:1px solid #999;display:flex;align-items:center;padding:0 4px 0 5px;border-top:1px solid #eee}
.search em{flex:1;color:#777;font-size:11px;margin-top:-4px}
.tree{background:#fff;margin:3px 7px 0 4px;flex:none;border:1px solid #e8e8e8;border-width:0 1px 0 0}
.t1{height:438px}
.thead{display:grid;grid-template-columns:292px 100px 18px 18px 19px;height:20px;border-bottom:1px solid #e0e0e0}
.thead i{border-right:1px solid #e4e4e4}
.row{display:grid;grid-template-columns:292px 100px 18px 18px 19px;height:21px;align-items:stretch}
.row1{height:21px}
.row b,.rr b{display:flex;align-items:center}
.row .c,.rr .c{justify-content:center}
.nm{display:flex;align-items:center;padding-left:15px;height:21px}
.nm.l1{padding-left:42px}
.nm.root{padding-left:12px}
.nm.root .tx{margin-left:5px}
.arr{width:23px;flex:none;position:relative;height:12px}
.arr.dn::before{content:"";position:absolute;left:0;top:2px;border-style:solid;border-width:0 0 7px 7px;border-color:transparent transparent #111 transparent}
.arr.rt::before{content:"";position:absolute;left:0;top:1px;border-style:solid;border-width:5px 0 5px 5px;border-color:transparent transparent transparent #222}
.arr.rt::after{content:"";position:absolute;left:1px;top:3px;border-style:solid;border-width:3px 0 3px 3px;border-color:transparent transparent transparent #fff}
.ti{width:16px;height:16px;flex:none;display:block}
.ey{width:14px;height:8px;display:block}
.eo{width:14px;height:10px;display:block}
.tx{margin-left:6px;white-space:nowrap;height:21px;line-height:20px;color:#1c1c28}
.bold{font-weight:700}
.it{font-style:italic}
.tx.sel{flex:1;margin-left:4px;padding-left:1px}
.sel{background:#b0b0b0;border:1px dotted #555}
.teal{border-color:#2c8e8e;margin-left:2px}
.part{padding-left:4px;color:#1c1c28}
.sw{width:6px;height:13px;border-radius:1px}
.blk{background:#000}.grn{background:#00f000}
.gh{background:#fff;border:1px solid #e3e3e3}
.ltabs{flex:none;display:flex;height:22px;margin-top:4px;padding-left:2px;font-size:11.200px}
.ltabs span{display:flex;align-items:center;padding:0 6px 3px 6px;color:#222}
.ltabs span.on{background:#f8f8f8;border-right:1px solid #e4e4e4}
.split{flex:none;height:2px;margin:4px 3px 0 1px;background:#d9d9d9}
.t2{height:441px;margin-top:4px}
.thead2{height:19px;border-bottom:1px solid #e0e0e0}
.rollb{position:absolute;left:14px;top:1px;width:7px;height:10px}
.ltabs.bottom{margin-top:1px;padding-left:1px}
.ltabs.bottom span.on{padding:0 7px 3px;width:58px}

/* viewport */
.viewport{flex:1;background:#fff;position:relative;min-width:0}
.vtools{display:flex;padding:11px 0 0 217px;gap:30px}
.vbox{height:27px;background:#fff;border:1px solid #cfcfcf;border-radius:3px;display:flex;align-items:center;box-shadow:0 1px 1px rgba(0,0,0,.08);flex:none}
.b1{width:169px}
.b2{width:245px;margin-right:1px}
.b3{width:193px}
.vi1{width:18px;height:18px;margin:0 2px;flex:none}
.vi1.hl{background:#cfe8f5;outline:2px solid #cfe8f5}
.vbox .car{margin:0 0 0 -1px;border-top-color:#555}
.vs{width:1px;height:22px;background:#ddd;margin:0 1px;flex:none}
.b2 .vi1{margin:0 2.700px}
.b2 .vs{margin:0 0 0 -1px}
.b3 .vi1{margin:0 2.600px}
.b3 .vs{margin:0}
.legend{position:absolute;left:30px;top:178px;width:100px}
.lg-t{width:64px;text-align:center;font-size:12px;font-weight:700;line-height:16px;color:#333}
.lg-u{width:64px;text-align:center;font-size:10px;font-weight:700;line-height:12px;color:#444;margin-top:-1px}
.lg-m{width:64px;text-align:center;font-size:9.500px;line-height:12px;margin-top:17px;white-space:nowrap;color:#222}
.lg-in{width:64px;height:21px;border:1px solid #ddd;border-radius:3px;margin-top:2px;padding-left:4px;font-size:11.500px;line-height:19px;color:#444;background:#fff}
.lg-in.lo{margin-top:14px}
.lg-m.mn{margin-top:2px}
.lg-body{display:flex;margin:18px 0 0 16px;height:350px;position:relative}
.lg-bar{width:32px;height:350px;flex:none;display:block}
.lg-lb{display:grid;grid-template-rows:55px 59px 60px 55px 60px 60px 20px;margin:-10px 0 0 4px;font-size:11.500px;color:#444;line-height:16px}
.stool{position:absolute;background:#fff;border:1px solid #d4d4d4;border-radius:3px;display:flex;flex-direction:column;align-items:center;padding:2px;gap:2px}
.stool span{width:22px;height:20px;display:flex;align-items:center;justify-content:center;border-radius:2px}
.stool span svg{width:18px;height:18px}
.stool span.on{background:#cfe8f5;border:1px solid #b7d9ea}
.st1{left:1px;top:353px;width:29px;height:47px}
.st2{left:2px;top:417px;width:27px;height:45px;padding:0;gap:3px}
.st2 span{height:21px;margin-top:0}
.st3{left:2px;top:473px;width:27px;height:79px}
.st3 span{height:23px}
.model{position:absolute;left:370px;top:348px;width:450px;height:300px}
.triad{position:absolute;left:39px;top:867px;width:110px;height:110px}
.ax{position:absolute;font-size:16px;line-height:18px}
.ax-y{left:32px;top:865px;color:#20b020}
.ax-x{left:134px;top:919px;color:#f02020}
.ax-z{left:51px;top:954px;color:#3a4be0}
.chart{position:absolute;left:285px;top:822px;width:690px}
.ch-lg{display:flex;align-items:center;height:12px;font-size:9.500px;font-weight:700;color:#555}
.ch-lg i{width:10px;height:10px;border-radius:2px;margin:0 5px 0 2px}
.ch-lg span{margin-right:8px}
.ch-lg .blue{background:#0a87c7}.ch-lg .green{background:#8bc34a}
.ch-plot{display:block;width:684px;height:60px;margin-top:10px;background:#efefef;outline:1px solid #c0c0c0;outline-offset:-1px;overflow:visible}
.ch-slide{width:684px;height:10px;margin-top:9px;background:#f8fafb;border:1px solid #ccc;position:relative}
.thumb{position:absolute;right:-9px;top:-5px;width:17px;height:18px;border-radius:50%;background:#cfe8f5;border:1px solid #8cc0d8;border-top:2.500px solid #f0a020}
.ch-ax{display:flex;height:14px;margin-top:7px;font-size:11px;line-height:14px;color:#333;width:690px}
.ch-ax span{flex:none;width:0;display:flex;justify-content:center;margin-left:54.400px}
.ch-ax span:first-child{margin-left:0}
.ch-ax span:nth-child(2){margin-left:43px}
.ch-ax span:nth-child(3){margin-left:51px}
.ch-ax span:last-child{margin-left:44px}
.ch-ctl{display:flex;align-items:center;height:30px;margin-top:5px}
.spin{width:67px;height:22px;background:#fff;border:1px solid #ddd;display:flex;align-items:center;padding:0 3px;font-size:10.500px}
.spin svg{width:12px;height:16px;flex:none}
.spin span{margin-left:4px;flex:1}
.spin em{display:block;width:8px;height:16px;margin-right:5px}
.spin em svg{width:8px;height:16px}
.cbtn{width:27px;height:30px;border:1px solid #ddd;border-radius:3px;background:#fff;display:flex;align-items:center;justify-content:center}
.cbtn svg{width:14px;height:14px}
.cbtn.on{background:#cfe8f5;margin-left:261px}
.cbtn + .cbtn{margin-left:10px;width:28px}
.info{position:absolute;left:1048px;top:829px;width:37px;height:37px;border-radius:50%;background:#fff;box-shadow:0 1px 4px rgba(0,0,0,.25);display:flex;align-items:center;justify-content:center;font:italic 700 24px "Liberation Serif",serif;color:#222}

/* right panel */
.rpanel{width:355px;flex:none;display:flex;flex-direction:column;background:#f0f0f0;position:relative;border-left:1px solid #e4e4e4}
.phead.r{margin:1px 0 0 1px;padding-left:4px}
.phead.r .x{margin-right:6px}
.rtree{flex:none;height:617px;margin:10px 33px 0 18px;background:#fff;border-left:1px solid #999;border-top:1px solid #aaa;font-size:10.500px}
.rhead{height:20px;border-bottom:1px solid #e0e0e0;display:flex;justify-content:flex-end}
.rhead i{width:21px;border-left:1px solid #e4e4e4}
.rr{display:flex;height:21px;width:301px}
.rn{display:flex;align-items:center;width:281px;flex:none}
.rn .arr{width:13px}
.n0{padding-left:6px}.n1{padding-left:24px}.n2{padding-left:42px}.n3{padding-left:60px}.n4{padding-left:78px}
.rr b{width:17px;flex:none}
.rn .bold{font-size:11.200px}
.rtabs{flex:none;display:flex;height:22px;margin:3px 0 0 13px;font-size:11px;white-space:nowrap}
.rtabs span{display:flex;align-items:center;padding:0 5px 3px;background:#f0f0f0;border:1px solid #e8e8e8;border-bottom:0;margin-top:1px}
.rtabs span.on{background:#f8f8f8;margin-top:0;padding:0 0 3px 6px;width:110px}
.gd{flex:none;width:328px;height:269px;margin-left:13px;border:3px solid #f8f8f8;padding:4px 0 0 11px;font-size:10.500px}
.gr{display:flex;align-items:center;white-space:nowrap}
.h20{height:20px}.h18{height:18px}.m6{margin-top:6px}.m5{margin-top:5px}.m4{margin-top:4px}.m3{margin-top:3px}.m2{margin-top:2px}
.lab{width:127px;flex:none}
.val{margin-left:95px;margin-top:0}
.gr .lab + .val{margin-left:96px}
.sel-box{width:119px;height:20px;background:#fff;border:1px solid #d5d5d5;border-radius:2px;display:flex;align-items:center;justify-content:space-between;padding:0 5px 0 3px}
.sel-box svg{width:10px;height:6px}
.radio{width:13px;height:13px;border-radius:50%;border:1px solid #666;background:#f8f8f8;margin-right:3px;flex:none}
.radio.on{border:3.500px solid #0a67b8;background:#fff}
.ind{padding-left:17px}
.dis{color:#a0a0a0;flex:none;width:203px}
.inp{display:block;width:49px;height:18px;line-height:17px;padding-left:5px;flex:none}
.dis-in{background:#eeeeee;border:1px solid #f8f8f8;color:#888}
.act{background:#fff;border-bottom:1px solid #888;color:#222}
.ind2{padding-left:18px}
.ind2 .inp{margin-left:auto;margin-right:42px}
.btnrow{margin-top:9px;height:23px;gap:1px}
.pb{height:23px;font:inherit;color:#1c1c28;background:#f0f0f0;border:1px solid #fff;border-right-color:#999;border-bottom-color:#999;padding:0}
.p1{width:162px}.p2{width:143px}
.dur{margin-top:40px}
.dl{width:66px}
.exit{position:absolute;left:323px;top:955px;width:16px;height:16px}

/* doc tabs */
.doctabs{height:31px;flex:none;background:#eef3f5;border-left:1px solid #777;display:flex;align-items:stretch;padding-left:5px;position:relative;border-bottom:1px solid #555}
.dt{display:flex;align-items:center;font-size:12.500px;color:#3c4a5a;position:relative}
.dt.on{width:232px;background:#fff;border-radius:0 0 5px 5px;padding-left:8px}
.dt.two{width:230px;padding-left:9px}
.di{width:16px;height:16px;flex:none}
.dt span{margin-left:6px}
.dx{position:absolute;right:15px;top:11px;width:8px;height:8px}
.dt.two .dx{right:13px}
.dot{position:absolute;left:191px;top:13px;width:5px;height:5px;border-radius:50%;background:#2b3a4a}
.dsep{width:1px;height:22px;background:#d4dadd;margin:4px 0 0 0}
.dplus{width:14px;height:14px;margin:8px 0 0 13px}

/* taskbar */
.taskbar{height:49px;flex:none;display:flex;background:linear-gradient(90deg,#241a2c 0,#2a1a2a 32%,#3f1d15 68%,#381c18 80%,#2b1d24 100%);color:#fff;position:relative}
.weather{width:652px;flex:none;display:flex;padding-left:21px;align-items:center}
.sun{width:20px;height:23px;border-radius:50%;background:radial-gradient(circle at 30% 30%,#f6b02a,#e8700f)}
.wt{margin-left:9px;display:flex;flex-direction:column;font-size:11.500px;line-height:16px;align-items:flex-start}
.he{color:#b8b0b8}
.tb{width:44.200px;flex:none;display:flex;align-items:center;justify-content:center;position:relative;height:49px}
.tb svg{width:23px;height:23px;margin-top:1px}
.tb u{position:absolute;left:20.500px;top:41px;width:3px;height:3px;border-radius:50%;background:#8a8088;text-decoration:none}
.tb:first-of-type u{display:none}
.tb.act{background:rgba(255,255,255,.07);border-radius:4px;height:39px;margin-top:5px;width:40px;margin-left:2px;margin-right:2.200px}
.tb.act u{left:14px;top:36px;width:12px;border-radius:1px;background:#8fc8e8}
.tb.act svg{margin-top:-3px}
.svt{font:700 9px "Liberation Sans",sans-serif;fill:#fff;text-anchor:middle}
.svx{font:400 12px "Noto Sans",sans-serif;fill:#fff;text-anchor:middle}
.tray{position:absolute;left:1628px;top:0;height:49px;width:292px;display:flex;align-items:center}
.tr-c{width:10px;height:6px;flex:none}
.tr-o{width:18px;height:13px;margin-left:20px;flex:none}
.eng{font-size:11px;margin-left:17px;width:28px;flex:none}
.tr-i{width:16px;height:16px;margin-left:8px;flex:none}
.eng + .tr-i{margin-left:11px}
.clock{width:72px;margin-left:12px;display:flex;flex-direction:column;align-items:flex-end;font-size:11.500px;line-height:19px;flex:none}
.tr-b{width:14px;height:16px;margin-left:7px;flex:none}
```
